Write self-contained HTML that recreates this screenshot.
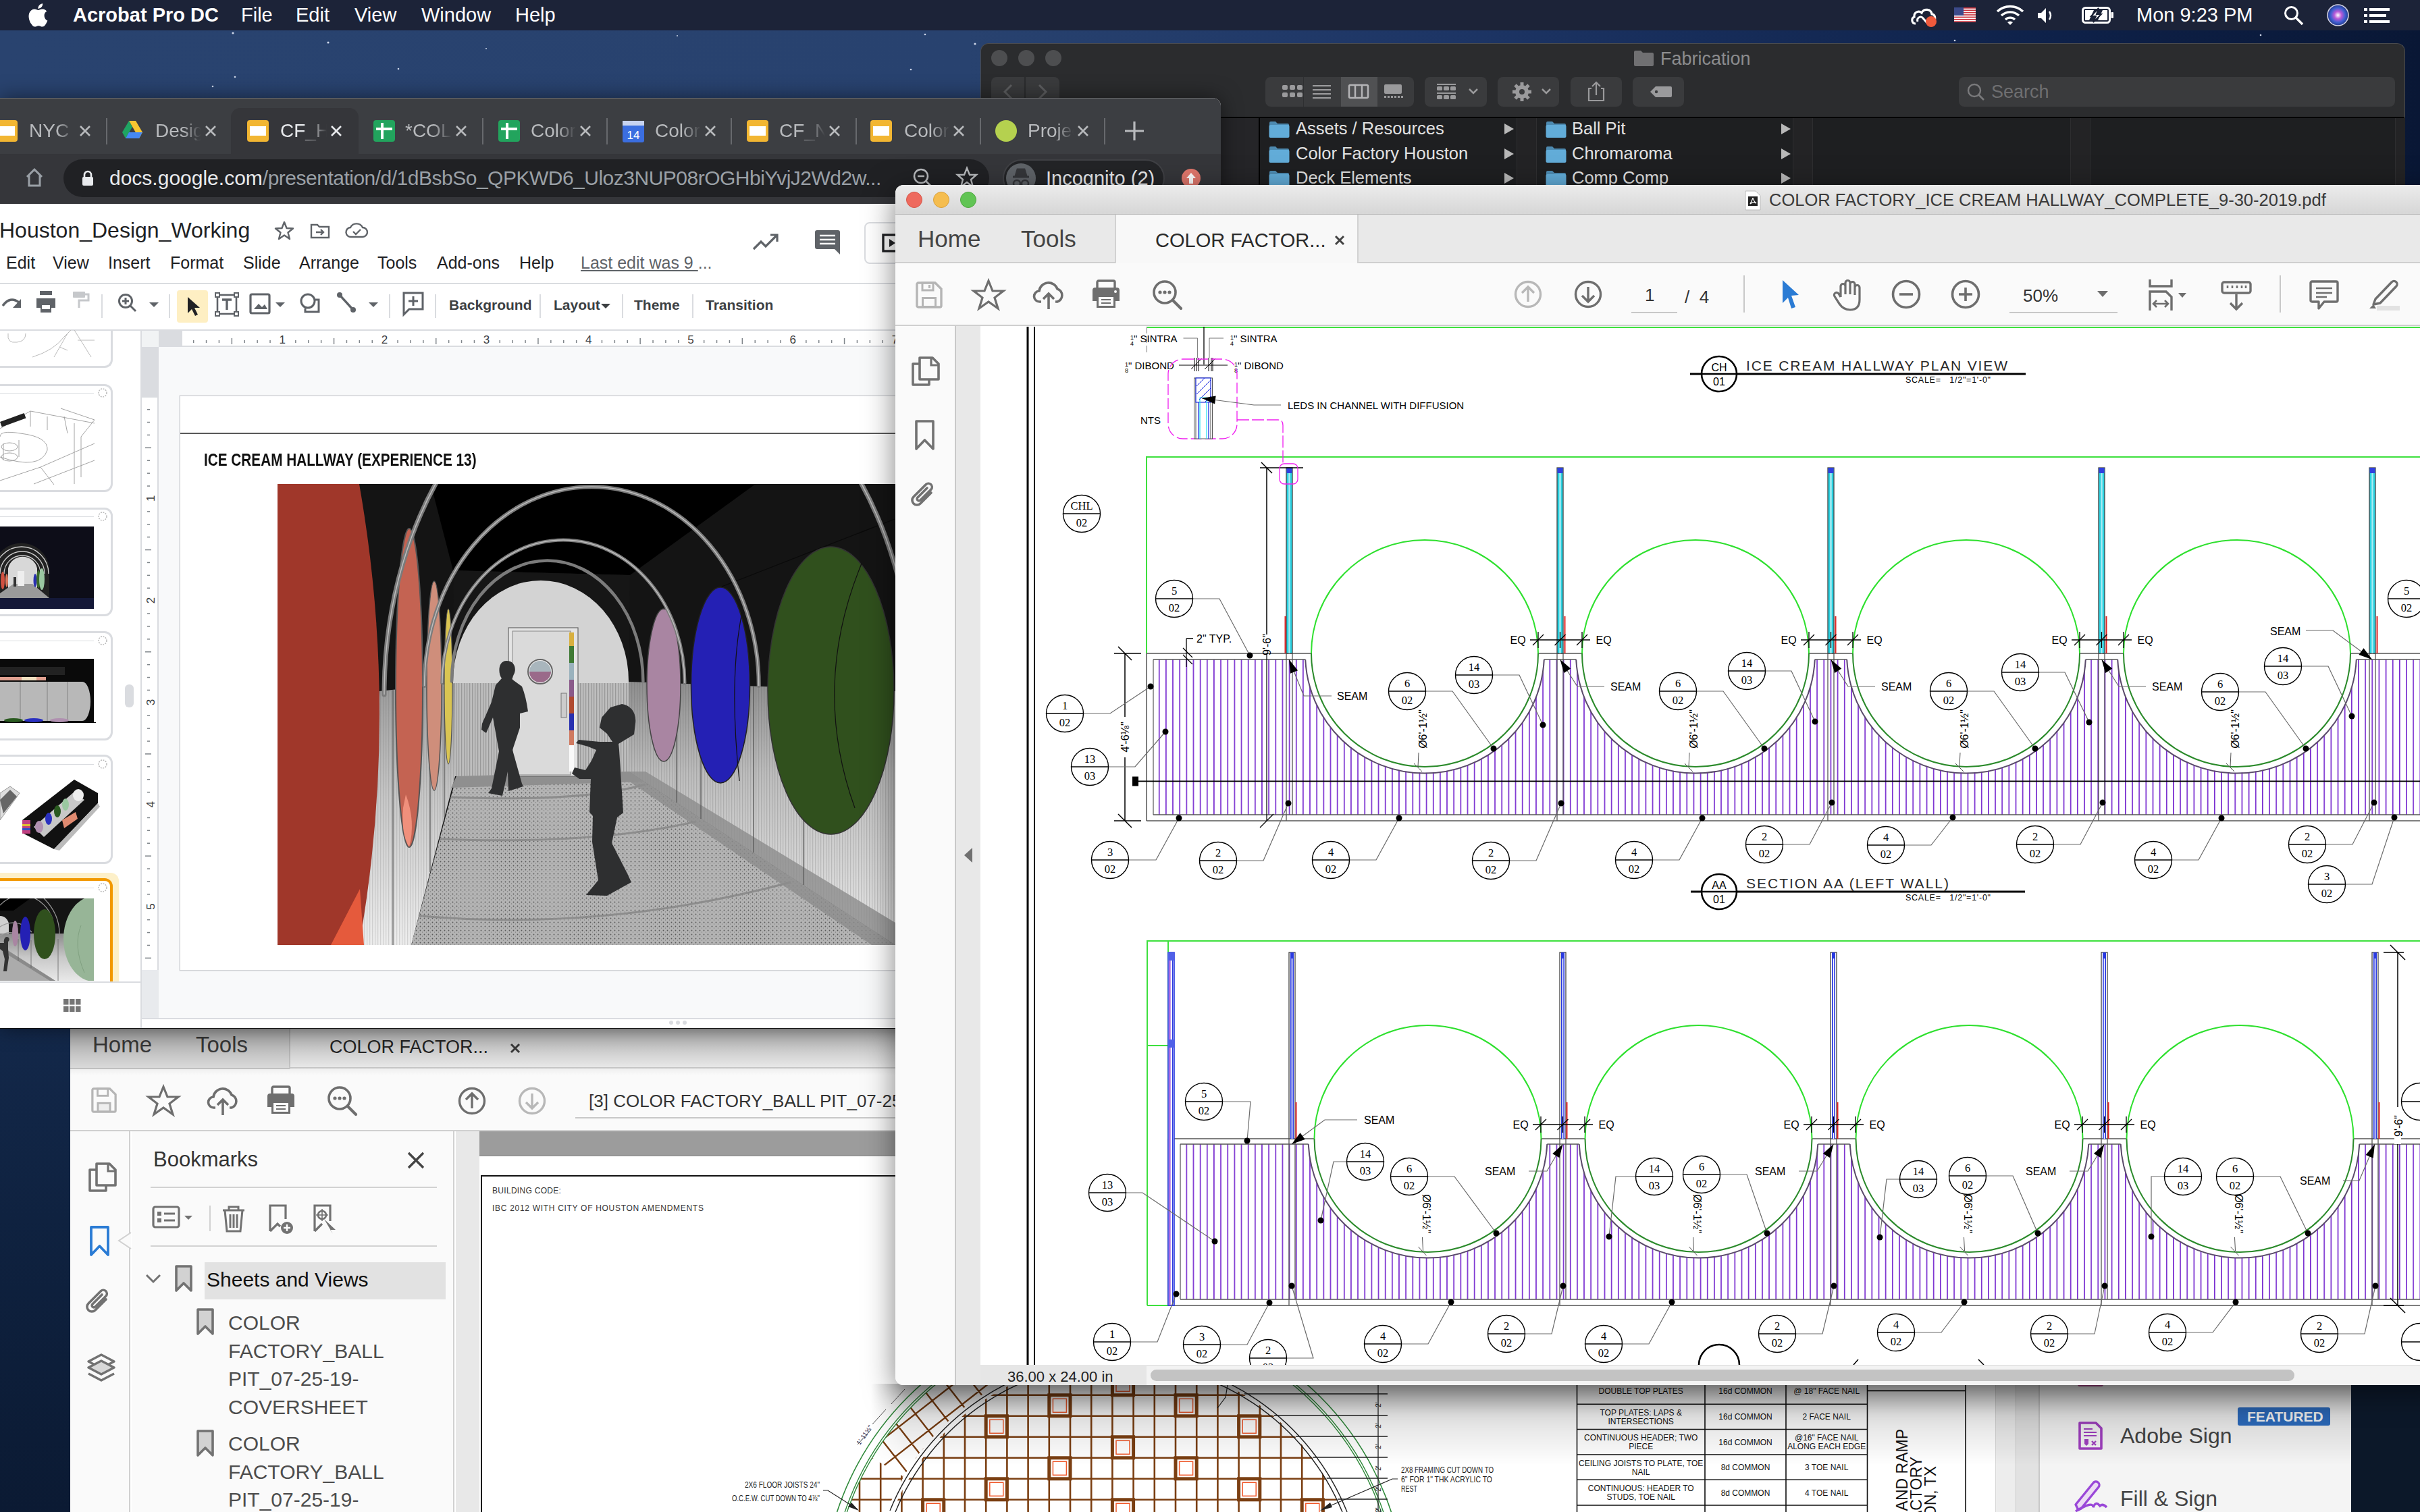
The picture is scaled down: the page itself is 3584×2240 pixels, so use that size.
<!DOCTYPE html>
<html><head><meta charset="utf-8">
<style>
*{box-sizing:border-box;margin:0;padding:0}
html,body{width:3584px;height:2240px;overflow:hidden}
body{position:relative;font-family:"Liberation Sans",sans-serif;background:#0e1a33}
.a{position:absolute}
.t{position:absolute;white-space:nowrap;line-height:1}
svg{position:absolute;overflow:visible}
</style></head><body>
<!-- desktop -->
<div class="a" style="left:0;top:0;width:3584px;height:2240px;background:linear-gradient(90deg,#29436f 0%,#28426f 40%,#1d3565 60%,#0e2149 85%,#091735 100%)"></div>
<svg class="a" style="left:0;top:0" width="3584" height="300">
<g fill="#cfd8ea">
<circle cx="345" cy="49" r="1.6"/><circle cx="486" cy="63" r="1.6"/><circle cx="315" cy="128" r="1.3"/><circle cx="590" cy="102" r="1.3"/><circle cx="348" cy="114" r="1.3"/><circle cx="1370" cy="51" r="1.3"/><circle cx="1444" cy="65" r="1.6"/><circle cx="1349" cy="103" r="1.3"/><circle cx="2895" cy="60" r="1.3"/><circle cx="3348" cy="52" r="1.3"/><circle cx="1003" cy="53" r="1"/><circle cx="720" cy="72" r="1"/>
</g></svg>
<!-- menu bar -->
<div class="a" style="left:0;top:0;width:3584px;height:45px;background:#1c2338"></div>
<svg style="left:41px;top:4px" width="30" height="36" viewBox="0 0 30 36"><path fill="#fff" d="M24.6 19.1c0-4.2 3.4-6.2 3.6-6.3-2-2.9-5-3.3-6.1-3.3-2.6-.3-5.1 1.5-6.4 1.5-1.3 0-3.4-1.5-5.6-1.5C7.2 9.6 4.5 11.3 3 13.9c-3 5.3-.8 13.1 2.2 17.4 1.4 2.1 3.1 4.4 5.4 4.3 2.2-.1 3-1.4 5.6-1.4s3.3 1.4 5.6 1.4c2.3 0 3.8-2.1 5.2-4.2 1.6-2.4 2.3-4.7 2.4-4.8-.1 0-4.7-1.8-4.8-7.5zM20.4 6.6C21.6 5.2 22.4 3.2 22.2 1.2c-1.7.1-3.8 1.1-5 2.5-1.1 1.3-2.1 3.3-1.8 5.2 1.9.1 3.8-1 5-2.3z"/></svg>
<div class="t" style="left:108px;top:8px;font-size:29px;font-weight:bold;color:#fff">Acrobat Pro DC</div>
<div class="t" style="left:357px;top:8px;font-size:29px;color:#fff">File</div>
<div class="t" style="left:438px;top:8px;font-size:29px;color:#fff">Edit</div>
<div class="t" style="left:525px;top:8px;font-size:29px;color:#fff">View</div>
<div class="t" style="left:624px;top:8px;font-size:29px;color:#fff">Window</div>
<div class="t" style="left:763px;top:8px;font-size:29px;color:#fff">Help</div>
<div class="t" style="left:3164px;top:8px;font-size:29px;color:#fff">Mon 9:23 PM</div>
<svg style="left:2829px;top:8px" width="42" height="32" viewBox="0 0 42 32">
<path d="M8 27 C2 27 1 19 6 17 C5 10 13 7 17 11 C20 4 31 5 32 13 C37 13 38 20 35 23" fill="none" stroke="#fff" stroke-width="3.2"/>
<path d="M11 24 C9 18 16 15 19 19 L25 26" fill="none" stroke="#fff" stroke-width="3"/>
<circle cx="31" cy="24" r="8" fill="#f05a3c"/></svg>
<svg style="left:2894px;top:11px" width="32" height="22" viewBox="0 0 32 22">
<rect width="32" height="22" fill="#fff"/>
<g fill="#c8323c"><rect y="0" width="32" height="1.7"/><rect y="3.4" width="32" height="1.7"/><rect y="6.8" width="32" height="1.7"/><rect y="10.2" width="32" height="1.7"/><rect y="13.6" width="32" height="1.7"/><rect y="17" width="32" height="1.7"/><rect y="20.3" width="32" height="1.7"/></g>
<rect width="14" height="12" fill="#3c4a8a"/></svg>
<svg style="left:2956px;top:7px" width="42" height="30" viewBox="0 0 42 30">
<path d="M2 10 A28 28 0 0 1 40 10" fill="none" stroke="#fff" stroke-width="3.4"/>
<path d="M8 16 A19 19 0 0 1 34 16" fill="none" stroke="#fff" stroke-width="3.4"/>
<path d="M14 22 A10 10 0 0 1 28 22" fill="none" stroke="#fff" stroke-width="3.4"/>
<path d="M17 26 L21 30 L25 26 A6 6 0 0 0 17 26Z" fill="#fff"/></svg>
<svg style="left:3018px;top:11px" width="26" height="24" viewBox="0 0 26 24">
<path d="M0 8 H5 L12 1 V23 L5 16 H0Z" fill="#fff"/><path d="M17 6 Q21 12 17 18" fill="none" stroke="#fff" stroke-width="2.4"/></svg>
<svg style="left:3083px;top:10px" width="48" height="25" viewBox="0 0 48 25">
<rect x="1.5" y="1.5" width="40" height="22" rx="4" fill="none" stroke="#fff" stroke-width="3"/>
<rect x="43.5" y="8" width="3.5" height="9" rx="1" fill="#fff"/>
<path d="M5 5 H18 L11 20 H5Z M38 5 H31 L24 20 H38Z" fill="#fff"/>
<path d="M25 2 L14 14 H21 L17 23 L29 11 H22Z" fill="#fff" stroke="#1a2034" stroke-width="2"/></svg>
<svg style="left:3382px;top:8px" width="30" height="30" viewBox="0 0 30 30">
<circle cx="11.5" cy="11.5" r="9" fill="none" stroke="#fff" stroke-width="3"/><path d="M18 18 L28 28" stroke="#fff" stroke-width="3.4"/></svg>
<svg style="left:3446px;top:6px" width="33" height="33" viewBox="0 0 33 33">
<defs><radialGradient id="siri" cx="50%" cy="50%" r="50%"><stop offset="0" stop-color="#fff"/><stop offset="0.35" stop-color="#b95ad8"/><stop offset="0.7" stop-color="#3d5fd0"/><stop offset="1" stop-color="#273a8a"/></radialGradient></defs>
<circle cx="16.5" cy="16.5" r="15.5" fill="url(#siri)" stroke="#d8d8e8" stroke-width="1.5"/></svg>
<svg style="left:3501px;top:11px" width="38" height="24" viewBox="0 0 38 24">
<g fill="#fff"><rect x="0" y="1" width="5" height="4"/><rect x="8" y="1" width="30" height="4"/><rect x="0" y="10" width="5" height="4"/><rect x="8" y="10" width="25" height="4"/><rect x="0" y="19" width="5" height="4"/><rect x="8" y="19" width="30" height="4"/></g></svg>
<!-- finder -->
<div class="a" style="left:1452px;top:64px;width:2110px;height:230px;background:#2b2c2e;border-radius:12px 12px 0 0;border:1px solid #4a4b4d;border-bottom:none"></div>
<div class="a" style="left:1453px;top:173px;width:2108px;height:2px;background:#050505"></div>
<div class="a" style="left:1453px;top:175px;width:2108px;height:110px;background:#1e1f21"></div>
<div class="a" style="left:1453px;top:175px;width:412px;height:110px;background:#252528"></div>
<div class="a" style="left:1864px;top:175px;width:2px;height:110px;background:#000"></div>
<div class="a" style="left:2246px;top:175px;width:30px;height:110px;background:#232325;border-left:1px solid #2e2e30;border-right:1px solid #2e2e30"></div>
<div class="a" style="left:2655px;top:175px;width:30px;height:110px;background:#232325;border-left:1px solid #2e2e30;border-right:1px solid #2e2e30"></div>
<div class="a" style="left:3066px;top:175px;width:30px;height:110px;background:#232325;border-left:1px solid #2e2e30;border-right:1px solid #2e2e30"></div>
<div class="a" style="left:3547px;top:175px;width:15px;height:110px;background:#232325;border-left:1px solid #2e2e30"></div>
<div class="a" style="left:1468px;top:74px;width:24px;height:24px;border-radius:50%;background:#4d4e50"></div>
<div class="a" style="left:1508px;top:74px;width:24px;height:24px;border-radius:50%;background:#4d4e50"></div>
<div class="a" style="left:1548px;top:74px;width:24px;height:24px;border-radius:50%;background:#4d4e50"></div>
<!-- toolbar buttons -->
<div class="a" style="left:1468px;top:114px;width:49px;height:44px;background:#3a3b3d;border-radius:8px 0 0 8px"></div>
<div class="a" style="left:1519px;top:114px;width:50px;height:44px;background:#3a3b3d;border-radius:0 8px 8px 0"></div>
<svg style="left:1468px;top:114px" width="101" height="44"><path d="M30 12 L20 22 L30 32" fill="none" stroke="#5d5e60" stroke-width="3"/><path d="M71 12 L81 22 L71 32" fill="none" stroke="#5d5e60" stroke-width="3"/></svg>
<div class="a" style="left:1874px;top:114px;width:220px;height:44px;background:#3a3b3d;border-radius:8px"></div>
<div class="a" style="left:1986px;top:114px;width:54px;height:44px;background:#505153"></div>
<div class="a" style="left:1930px;top:114px;width:1px;height:44px;background:#2e2f31"></div>
<div class="a" style="left:2094px;top:114px;width:0;height:0"></div>
<svg style="left:1874px;top:114px" width="220" height="44">
<g fill="#9a9a9c"><rect x="25" y="12" width="8" height="7" rx="2"/><rect x="36" y="12" width="8" height="7" rx="2"/><rect x="47" y="12" width="8" height="7" rx="2"/><rect x="25" y="23" width="8" height="7" rx="2"/><rect x="36" y="23" width="8" height="7" rx="2"/><rect x="47" y="23" width="8" height="7" rx="2"/>
<rect x="70" y="12" width="27" height="2.2"/><rect x="70" y="18" width="27" height="2.2"/><rect x="70" y="24" width="27" height="2.2"/><rect x="70" y="30" width="27" height="2.2"/>
<rect x="176" y="11" width="26" height="14" rx="2"/><rect x="176" y="28" width="3" height="3"/><rect x="181" y="28" width="3" height="3"/><rect x="186" y="28" width="3" height="3"/><rect x="191" y="28" width="3" height="3"/><rect x="196" y="28" width="3" height="3"/><rect x="201" y="28" width="3" height="3"/></g>
<rect x="124" y="12" width="28" height="19" rx="2" fill="none" stroke="#b4b4b6" stroke-width="2.5"/><path d="M133 12 V31 M143 12 V31" stroke="#b4b4b6" stroke-width="2.5"/></svg>
<div class="a" style="left:2110px;top:114px;width:92px;height:44px;background:#3a3b3d;border-radius:8px"></div>
<svg style="left:2110px;top:114px" width="92" height="44"><g fill="#9a9a9c"><rect x="18" y="10" width="28" height="2"/><rect x="18" y="14" width="8" height="6" rx="1.5"/><rect x="28" y="14" width="8" height="6" rx="1.5"/><rect x="38" y="14" width="8" height="6" rx="1.5"/><rect x="18" y="23" width="28" height="2"/><rect x="18" y="27" width="8" height="6" rx="1.5"/><rect x="28" y="27" width="8" height="6" rx="1.5"/><rect x="38" y="27" width="8" height="6" rx="1.5"/></g><path d="M66 18 L72 24 L78 18" fill="none" stroke="#9a9a9c" stroke-width="2.5"/></svg>
<div class="a" style="left:2218px;top:114px;width:91px;height:44px;background:#3a3b3d;border-radius:8px"></div>
<svg style="left:2218px;top:114px" width="91" height="44"><g transform="translate(36,22)"><circle r="10" fill="#9a9a9c"/><g stroke="#9a9a9c" stroke-width="5"><path d="M0 -14 V14 M-14 0 H14 M-10 -10 L10 10 M-10 10 L10 -10"/></g><circle r="4" fill="#3a3b3d"/></g><path d="M66 18 L72 24 L78 18" fill="none" stroke="#9a9a9c" stroke-width="2.5"/></svg>
<div class="a" style="left:2326px;top:114px;width:76px;height:44px;background:#3a3b3d;border-radius:8px"></div>
<svg style="left:2326px;top:114px" width="76" height="44"><path d="M31 17 H27 V35 H49 V17 H45 M38 27 V8 M32 14 L38 8 L44 14" fill="none" stroke="#9a9a9c" stroke-width="2.2"/></svg>
<div class="a" style="left:2418px;top:114px;width:76px;height:44px;background:#3a3b3d;border-radius:8px"></div>
<svg style="left:2418px;top:114px" width="76" height="44"><path d="M26 22 L34 14 H56 A2 2 0 0 1 58 16 V28 A2 2 0 0 1 56 30 H34Z" fill="#9a9a9c"/><circle cx="35" cy="22" r="2.2" fill="#3a3b3d"/></svg>
<div class="a" style="left:2901px;top:114px;width:646px;height:44px;background:#3a3b3d;border-radius:8px"></div>
<svg style="left:2912px;top:122px" width="30" height="30"><circle cx="12" cy="12" r="9" fill="none" stroke="#7a7a7c" stroke-width="2.4"/><path d="M18.5 18.5 L26 26" stroke="#7a7a7c" stroke-width="2.6"/></svg>
<div class="t" style="left:2949px;top:123px;font-size:27px;color:#6f6f71">Search</div>
<svg style="left:2419px;top:74px" width="31" height="25"><path d="M1 3 A2 2 0 0 1 3 1 H11 L14 4 H28 A2 2 0 0 1 30 6 V22 A2 2 0 0 1 28 24 H3 A2 2 0 0 1 1 22Z" fill="#707072"/></svg>
<div class="t" style="left:2459px;top:74px;font-size:27px;color:#8c8c8e">Fabrication</div>
<svg style="left:1879px;top:179px" width="31" height="26"><path d="M1 3 A2 2 0 0 1 3 1 H10 L13 4 H28 A2 2 0 0 1 30 6 V8 H1Z" fill="#4d8ab0"/><rect x="0.5" y="6" width="30" height="19" rx="2" fill="#62acd8"/></svg><div class="t" style="left:1919px;top:178px;font-size:25.5px;color:#e2e2e2">Assets / Resources</div><svg style="left:2227px;top:182px" width="16" height="18"><path d="M1 1 L15 9 L1 17Z" fill="#b8b8b8"/></svg><svg style="left:2289px;top:179px" width="31" height="26"><path d="M1 3 A2 2 0 0 1 3 1 H10 L13 4 H28 A2 2 0 0 1 30 6 V8 H1Z" fill="#4d8ab0"/><rect x="0.5" y="6" width="30" height="19" rx="2" fill="#62acd8"/></svg><div class="t" style="left:2328px;top:178px;font-size:25.5px;color:#e2e2e2">Ball Pit</div><svg style="left:2637px;top:182px" width="16" height="18"><path d="M1 1 L15 9 L1 17Z" fill="#b8b8b8"/></svg><svg style="left:1879px;top:216px" width="31" height="26"><path d="M1 3 A2 2 0 0 1 3 1 H10 L13 4 H28 A2 2 0 0 1 30 6 V8 H1Z" fill="#4d8ab0"/><rect x="0.5" y="6" width="30" height="19" rx="2" fill="#62acd8"/></svg><div class="t" style="left:1919px;top:215px;font-size:25.5px;color:#e2e2e2">Color Factory Houston</div><svg style="left:2227px;top:219px" width="16" height="18"><path d="M1 1 L15 9 L1 17Z" fill="#b8b8b8"/></svg><svg style="left:2289px;top:216px" width="31" height="26"><path d="M1 3 A2 2 0 0 1 3 1 H10 L13 4 H28 A2 2 0 0 1 30 6 V8 H1Z" fill="#4d8ab0"/><rect x="0.5" y="6" width="30" height="19" rx="2" fill="#62acd8"/></svg><div class="t" style="left:2328px;top:215px;font-size:25.5px;color:#e2e2e2">Chromaroma</div><svg style="left:2637px;top:219px" width="16" height="18"><path d="M1 1 L15 9 L1 17Z" fill="#b8b8b8"/></svg><svg style="left:1879px;top:252px" width="31" height="26"><path d="M1 3 A2 2 0 0 1 3 1 H10 L13 4 H28 A2 2 0 0 1 30 6 V8 H1Z" fill="#4d8ab0"/><rect x="0.5" y="6" width="30" height="19" rx="2" fill="#62acd8"/></svg><div class="t" style="left:1919px;top:251px;font-size:25.5px;color:#e2e2e2">Deck Elements</div><svg style="left:2227px;top:255px" width="16" height="18"><path d="M1 1 L15 9 L1 17Z" fill="#b8b8b8"/></svg><svg style="left:2289px;top:252px" width="31" height="26"><path d="M1 3 A2 2 0 0 1 3 1 H10 L13 4 H28 A2 2 0 0 1 30 6 V8 H1Z" fill="#4d8ab0"/><rect x="0.5" y="6" width="30" height="19" rx="2" fill="#62acd8"/></svg><div class="t" style="left:2328px;top:251px;font-size:25.5px;color:#e2e2e2">Comp Comp</div><svg style="left:2637px;top:255px" width="16" height="18"><path d="M1 1 L15 9 L1 17Z" fill="#b8b8b8"/></svg>
<!-- background acrobat window (bottom) -->
<div class="a" style="left:0;top:1515px;width:104px;height:725px;background:linear-gradient(180deg,#13284a,#0f2240 40%,#0b1a33)"></div>
<div class="a" style="left:3482px;top:2040px;width:102px;height:200px;background:#0c1829"></div>
<div class="a" style="left:104px;top:1515px;width:3378px;height:740px;background:#fff;overflow:hidden">
<div class="a" style="left:0;top:0;width:3378px;height:68px;background:#f4f4f4;border-bottom:2px solid #cfcfcf"></div>
<div class="a" style="left:0;top:0;width:326px;height:69px;background:#e4e4e4;border-right:2px solid #cfcfcf;border-bottom:2px solid #c8c8c8"></div>
<div class="a" style="left:0;top:69px;width:3378px;height:92px;background:#fafafa;border-bottom:2px solid #d0d0d0"></div>
<div class="a" style="left:0;top:161px;width:89px;height:600px;background:#fafafa;border-right:2px solid #d0d0d0"></div>
<div class="a" style="left:91px;top:161px;width:478px;height:600px;background:#fafafa;border-right:2px solid #d0d0d0"></div>
<div class="a" style="left:571px;top:161px;width:35px;height:600px;background:#e8e8e8"></div>
<div class="a" style="left:606px;top:161px;width:2300px;height:37px;background:#9c9c9c;border-bottom:1px solid #888"></div>
<div class="a" style="left:608px;top:226px;width:2300px;height:600px;border-left:2px solid #111;border-top:2px solid #111"></div>
<div class="a" style="left:2851px;top:161px;width:30px;height:600px;background:#ededed;border-left:1px solid #d8d8d8"></div>
<div class="a" style="left:2881px;top:161px;width:36px;height:600px;background:#e2e2e2;border-left:1px solid #c8c8c8;border-right:2px solid #c8c8c8"></div>
<div class="a" style="left:2917px;top:161px;width:461px;height:600px;background:#f4f4f4"></div>
</div>
<div class="t" style="left:137px;top:1531px;font-size:33px;color:#444">Home</div>
<div class="t" style="left:290px;top:1531px;font-size:33px;color:#444">Tools</div>
<div class="t" style="left:488px;top:1538px;font-size:27px;color:#2b2b2b">COLOR FACTOR...</div>
<svg style="left:755px;top:1545px" width="16" height="16"><path d="M2 2 L14 14 M14 2 L2 14" stroke="#444" stroke-width="3"/></svg>
<svg style="left:134px;top:1610px" width="40" height="40" viewBox="0 0 42 42"><path d="M3 5 A2 2 0 0 1 5 3 H30 L39 12 V37 A2 2 0 0 1 37 39 H5 A2 2 0 0 1 3 37Z" fill="none" stroke="#b5b5b5" stroke-width="3.4"/><rect x="11" y="3" width="16" height="11" fill="none" stroke="#b5b5b5" stroke-width="3"/><rect x="10" y="24" width="22" height="15" fill="#b5b5b5"/><rect x="13" y="27" width="16" height="10" fill="#eee"/></svg>
<svg style="left:218px;top:1607px" width="48" height="46" viewBox="0 0 48 46"><path d="M24 3 L30 18 L46 18 L33 28 L38 44 L24 34 L10 44 L15 28 L2 18 L18 18Z" fill="none" stroke="#6e6e6e" stroke-width="3.2"/></svg>
<svg style="left:307px;top:1609px" width="46" height="44" viewBox="0 0 46 44"><path d="M12 32 H10 A8 8 0 0 1 9 16 A14 14 0 0 1 36 13 A10 10 0 0 1 36 32 H33" fill="none" stroke="#6e6e6e" stroke-width="3.6"/><path d="M23 43 V20 M15 28 L23 20 L31 28" fill="none" stroke="#6e6e6e" stroke-width="3.6"/></svg>
<svg style="left:394px;top:1608px" width="44" height="44" viewBox="0 0 44 44"><rect x="9" y="2" width="26" height="12" rx="2" fill="none" stroke="#6e6e6e" stroke-width="3.4"/><path d="M2 16 A4 4 0 0 1 6 12 H38 A4 4 0 0 1 42 16 V32 H36 V42 H8 V32 H2Z" fill="#6e6e6e"/><rect x="11" y="26" width="22" height="13" fill="#fafafa"/><path d="M15 30 H29 M15 35 H29" stroke="#6e6e6e" stroke-width="2.2"/></svg>
<svg style="left:484px;top:1608px" width="46" height="46" viewBox="0 0 46 46"><circle cx="19" cy="19" r="16" fill="none" stroke="#6e6e6e" stroke-width="3.6"/><path d="M31 31 L43 43" stroke="#6e6e6e" stroke-width="4.2" stroke-linecap="round"/><circle cx="12" cy="19" r="2.6" fill="#6e6e6e"/><circle cx="19" cy="19" r="2.6" fill="#6e6e6e"/><circle cx="26" cy="19" r="2.6" fill="#6e6e6e"/></svg>
<svg style="left:678px;top:1610px" width="42" height="42"><circle cx="21" cy="21" r="18.5" fill="none" stroke="#6e6e6e" stroke-width="3.4"/><path d="M21 32 V11 M12 19 L21 10 L30 19" fill="none" stroke="#6e6e6e" stroke-width="3.4"/></svg>
<svg style="left:767px;top:1610px" width="42" height="42"><circle cx="21" cy="21" r="18.5" fill="none" stroke="#b8b8b8" stroke-width="3.4"/><path d="M21 10 V31 M12 23 L21 32 L30 23" fill="none" stroke="#b8b8b8" stroke-width="3.4"/></svg>
<div class="t" style="left:872px;top:1618px;font-size:26px;color:#333">[3] COLOR FACTORY_BALL PIT_07-25-19</div>
<div class="a" style="left:852px;top:1655px;width:480px;height:2px;background:#c8c8c8"></div>
<svg style="left:131px;top:1722px" width="44" height="46" viewBox="0 0 44 46"><path d="M12 11 H2 V42 H26 V35" fill="none" stroke="#727272" stroke-width="3.6" stroke-linejoin="round"/><path d="M12 2 H31 L40 11 V34 H12Z" fill="#fafafa" stroke="#727272" stroke-width="3.6" stroke-linejoin="round"/><path d="M29 2 V13 H40" fill="none" stroke="#727272" stroke-width="3.2"/></svg>
<svg style="left:133px;top:1816px" width="30" height="46"><path d="M2 2 H27 V43 L14.5 30 L2 43Z" fill="none" stroke="#2a7bd4" stroke-width="3.8" stroke-linejoin="round"/></svg>
<svg style="left:176px;top:1826px" width="18" height="24"><path d="M18 0 L0 12 L18 24" fill="#fafafa" stroke="#d0d0d0" stroke-width="2"/></svg>
<svg style="left:127px;top:1907px" width="42" height="44" viewBox="0 0 42 44"><path d="M30 18 L14 34 A7 7 0 0 1 4 24 L22 6 A5 5 0 0 1 30 13 L14 29 A2.5 2.5 0 0 1 10 25 L24 11" fill="none" stroke="#727272" stroke-width="3.6" stroke-linecap="round"/></svg>
<svg style="left:128px;top:2004px" width="44" height="46" viewBox="0 0 44 46"><g fill="none" stroke="#727272" stroke-width="3.4" stroke-linejoin="round"><path d="M22 3 L41 13 L22 23 L3 13Z"/><path d="M3 22 L22 32 L41 22 L22 12Z" fill="#d8d8d8"/><path d="M3 31 L22 41 L41 31"/></g></svg>
<div class="t" style="left:227px;top:1702px;font-size:31px;color:#333">Bookmarks</div>
<svg style="left:602px;top:1705px" width="28" height="28"><path d="M3 3 L25 25 M25 3 L3 25" stroke="#444" stroke-width="3.4"/></svg>
<div class="a" style="left:223px;top:1758px;width:424px;height:2px;background:#d2d2d2"></div>
<svg style="left:225px;top:1784px" width="300" height="44" viewBox="0 0 300 44">
<rect x="2" y="4" width="38" height="30" rx="3" fill="none" stroke="#727272" stroke-width="3.2"/><rect x="8" y="11" width="6" height="6" fill="#727272"/><rect x="8" y="21" width="6" height="6" fill="#727272"/><path d="M18 14 H34 M18 24 H34" stroke="#727272" stroke-width="3"/>
<path d="M48 17 H60 L54 23Z" fill="#727272"/>
<rect x="85" y="2" width="2" height="38" fill="#d2d2d2"/>
<path d="M105 9 H137 M114 9 V4 H128 V9 M108 9 L111 40 H131 L134 9 M116 15 V35 M121 15 V35 M126 15 V35" fill="none" stroke="#727272" stroke-width="3"/>
<path d="M175 40 V2 H198 V22" fill="none" stroke="#727272" stroke-width="3.2"/><path d="M175 40 L186 29 L190 33" fill="none" stroke="#727272" stroke-width="3.2"/><circle cx="200" cy="35" r="9" fill="#727272"/><path d="M200 30 V40 M195 35 H205" stroke="#fff" stroke-width="2.4"/>
<path d="M241 40 V2 H264 V25 M241 40 L252 29" fill="none" stroke="#727272" stroke-width="3.2"/><circle cx="252" cy="16" r="6" fill="none" stroke="#727272" stroke-width="2.6"/><path d="M252 7 V25 M243 16 H261" stroke="#727272" stroke-width="1.6"/><path d="M255 22 L272 38 L264 38 L268 44" fill="#727272"/>
</svg>
<div class="a" style="left:223px;top:1845px;width:424px;height:2px;background:#d2d2d2"></div>
<svg style="left:215px;top:1886px" width="24" height="16"><path d="M2 3 L12 13 L22 3" fill="none" stroke="#727272" stroke-width="3"/></svg>
<svg style="left:259px;top:1874px" width="26" height="40"><path d="M2 2 H24 V38 L13 27 L2 38Z" fill="#d2d2d2" stroke="#727272" stroke-width="3.6" stroke-linejoin="round"/></svg>
<div class="a" style="left:303px;top:1870px;width:357px;height:55px;background:#e2e2e2"></div>
<div class="t" style="left:306px;top:1881px;font-size:30px;color:#111">Sheets and Views</div>
<svg style="left:291px;top:1938px" width="26" height="40"><path d="M2 2 H24 V38 L13 27 L2 38Z" fill="#d2d2d2" stroke="#727272" stroke-width="3.6" stroke-linejoin="round"/></svg>
<div class="t" style="left:338px;top:1939px;font-size:30px;color:#4d4d4d;line-height:41.5px;white-space:pre">COLOR
FACTORY_BALL
PIT_07-25-19-
COVERSHEET</div>
<svg style="left:291px;top:2118px" width="26" height="40"><path d="M2 2 H24 V38 L13 27 L2 38Z" fill="#d2d2d2" stroke="#727272" stroke-width="3.6" stroke-linejoin="round"/></svg>
<div class="t" style="left:338px;top:2118px;font-size:30px;color:#4d4d4d;line-height:41.5px;white-space:pre">COLOR
FACTORY_BALL
PIT_07-25-19-</div>
<div class="t" style="left:729px;top:1758px;font-size:12px;color:#333;letter-spacing:0.3px">BUILDING CODE:</div>
<div class="t" style="left:729px;top:1784px;font-size:12px;color:#333;letter-spacing:0.7px">IBC 2012 WITH CITY OF HOUSTON AMENDMENTS</div>
<svg style="left:0;top:0" width="3584" height="2240" viewBox="0 0 3584 2240">
<defs><clipPath id="bgpg"><rect x="713" y="1742" width="2242" height="498"/></clipPath>
<clipPath id="gridc"><circle cx="1650" cy="2375" r="364"/><path d="M1650 1957 A418 418 0 0 0 1650 2793Z"/></clipPath>
<clipPath id="ringc"><path d="M1290.8 2159.2 A419 419 0 0 1 1613.5 1957.6 L1618.3 2012.4 A364 364 0 0 0 1338.0 2187.5Z"/></clipPath>
</defs>
<g clip-path="url(#bgpg)" fill="none" font-family="Liberation Sans">
<g clip-path="url(#gridc)"><path d="M1179.4 1900 V2260 M1210.6 1900 V2260 M1241.8 1900 V2260 M1273.0 1900 V2260 M1304.2 1900 V2260 M1335.4 1900 V2260 M1366.6 1900 V2260 M1397.8 1900 V2260 M1429.0 1900 V2260 M1460.2 1900 V2260 M1491.4 1900 V2260 M1522.6 1900 V2260 M1553.8 1900 V2260 M1585.0 1900 V2260 M1616.2 1900 V2260 M1647.4 1900 V2260 M1678.6 1900 V2260 M1709.8 1900 V2260 M1741.0 1900 V2260 M1772.2 1900 V2260 M1803.4 1900 V2260 M1834.6 1900 V2260 M1865.8 1900 V2260 M1897.0 1900 V2260 M1928.2 1900 V2260 M1959.4 1900 V2260 M1990.6 1900 V2260 M2021.8 1900 V2260 M2053.0 1900 V2260 M2084.2 1900 V2260 M2115.4 1900 V2260 M2146.6 1900 V2260 M2177.8 1900 V2260 M1100 2252.8 H2200 M1100 2221.8 H2200 M1100 2190.8 H2200 M1100 2159.8 H2200 M1100 2128.8 H2200 M1100 2097.8 H2200 M1100 2066.8 H2200 M1100 2035.8 H2200 M1100 2004.8 H2200 M1100 1973.8 H2200 M1100 1942.8 H2200 M1100 1911.8 H2200 M1100 1880.8 H2200" stroke="#7b3f12" stroke-width="2.6"/>
<path d="M1290.8 2159.2 A419 419 0 0 1 1613.5 1957.6 L1618.3 2012.4 A364 364 0 0 0 1338.0 2187.5Z" fill="#fff"/>
<g clip-path="url(#ringc)"><g transform="translate(1400,2100) rotate(-38)"><path d="M-400 -630.0 H400 M-630.0 -400 V400 M-400 -598.5 H400 M-598.5 -400 V400 M-400 -567.0 H400 M-567.0 -400 V400 M-400 -535.5 H400 M-535.5 -400 V400 M-400 -504.0 H400 M-504.0 -400 V400 M-400 -472.5 H400 M-472.5 -400 V400 M-400 -441.0 H400 M-441.0 -400 V400 M-400 -409.5 H400 M-409.5 -400 V400 M-400 -378.0 H400 M-378.0 -400 V400 M-400 -346.5 H400 M-346.5 -400 V400 M-400 -315.0 H400 M-315.0 -400 V400 M-400 -283.5 H400 M-283.5 -400 V400 M-400 -252.0 H400 M-252.0 -400 V400 M-400 -220.5 H400 M-220.5 -400 V400 M-400 -189.0 H400 M-189.0 -400 V400 M-400 -157.5 H400 M-157.5 -400 V400 M-400 -126.0 H400 M-126.0 -400 V400 M-400 -94.5 H400 M-94.5 -400 V400 M-400 -63.0 H400 M-63.0 -400 V400 M-400 -31.5 H400 M-31.5 -400 V400 M-400 0.0 H400 M0.0 -400 V400 M-400 31.5 H400 M31.5 -400 V400 M-400 63.0 H400 M63.0 -400 V400 M-400 94.5 H400 M94.5 -400 V400 M-400 126.0 H400 M126.0 -400 V400 M-400 157.5 H400 M157.5 -400 V400 M-400 189.0 H400 M189.0 -400 V400 M-400 220.5 H400 M220.5 -400 V400 M-400 252.0 H400 M252.0 -400 V400 M-400 283.5 H400 M283.5 -400 V400 M-400 315.0 H400 M315.0 -400 V400 M-400 346.5 H400 M346.5 -400 V400 M-400 378.0 H400 M378.0 -400 V400 M-400 409.5 H400 M409.5 -400 V400 M-400 441.0 H400 M441.0 -400 V400 M-400 472.5 H400 M472.5 -400 V400 M-400 504.0 H400 M504.0 -400 V400 M-400 535.5 H400 M535.5 -400 V400 M-400 567.0 H400 M567.0 -400 V400 M-400 598.5 H400 M598.5 -400 V400" stroke="#7b3f12" stroke-width="2.4"/><rect x="-47" y="31.5" width="31.5" height="31.5" fill="none" stroke="#7b3f12" stroke-width="4.5"/><rect x="-41" y="37.5" width="19.5" height="19.5" stroke="#f26a3a" stroke-width="1.3"/><rect x="47" y="-63" width="31.5" height="31.5" fill="none" stroke="#7b3f12" stroke-width="4.5"/><rect x="53" y="-57" width="19.5" height="19.5" stroke="#f26a3a" stroke-width="1.3"/></g></g>
<path d="M1200 2168 L1300 2172 L1540 1990" stroke="none"/>
</g>
<g clip-path="url(#gridc)"><rect x="1553.8" y="2066.8" width="31.2" height="31" stroke="#7b3f12" stroke-width="5"/><rect x="1559.4" y="2072.3" width="20" height="20" stroke="#f0582a" stroke-width="1.5"/><rect x="1741.0" y="2066.8" width="31.2" height="31" stroke="#7b3f12" stroke-width="5"/><rect x="1746.6" y="2072.3" width="20" height="20" stroke="#f0582a" stroke-width="1.5"/><rect x="1460.2" y="2097.8" width="31.2" height="31" stroke="#7b3f12" stroke-width="5"/><rect x="1465.8" y="2103.3" width="20" height="20" stroke="#f0582a" stroke-width="1.5"/><rect x="1834.6" y="2097.8" width="31.2" height="31" stroke="#7b3f12" stroke-width="5"/><rect x="1840.2" y="2103.3" width="20" height="20" stroke="#f0582a" stroke-width="1.5"/><rect x="1647.4" y="2128.8" width="31.2" height="31" stroke="#7b3f12" stroke-width="5"/><rect x="1653.0" y="2134.3" width="20" height="20" stroke="#f0582a" stroke-width="1.5"/><rect x="1553.8" y="2159.8" width="31.2" height="31" stroke="#7b3f12" stroke-width="5"/><rect x="1559.4" y="2165.3" width="20" height="20" stroke="#f0582a" stroke-width="1.5"/><rect x="1741.0" y="2159.8" width="31.2" height="31" stroke="#7b3f12" stroke-width="5"/><rect x="1746.6" y="2165.3" width="20" height="20" stroke="#f0582a" stroke-width="1.5"/><rect x="1460.2" y="2190.8" width="31.2" height="31" stroke="#7b3f12" stroke-width="5"/><rect x="1465.8" y="2196.3" width="20" height="20" stroke="#f0582a" stroke-width="1.5"/><rect x="1834.6" y="2190.8" width="31.2" height="31" stroke="#7b3f12" stroke-width="5"/><rect x="1840.2" y="2196.3" width="20" height="20" stroke="#f0582a" stroke-width="1.5"/><rect x="1366.6" y="2221.8" width="31.2" height="31" stroke="#7b3f12" stroke-width="5"/><rect x="1372.2" y="2227.3" width="20" height="20" stroke="#f0582a" stroke-width="1.5"/><rect x="1647.4" y="2221.8" width="31.2" height="31" stroke="#7b3f12" stroke-width="5"/><rect x="1653.0" y="2227.3" width="20" height="20" stroke="#f0582a" stroke-width="1.5"/><rect x="1928.2" y="2221.8" width="31.2" height="31" stroke="#7b3f12" stroke-width="5"/><rect x="1933.8" y="2227.3" width="20" height="20" stroke="#f0582a" stroke-width="1.5"/><rect x="1647.4" y="2035.8" width="31.2" height="31" stroke="#7b3f12" stroke-width="5"/><rect x="1653.0" y="2041.3" width="20" height="20" stroke="#f0582a" stroke-width="1.5"/><rect x="1834.6" y="2004.8" width="31.2" height="31" stroke="#7b3f12" stroke-width="5"/><rect x="1840.2" y="2010.3" width="20" height="20" stroke="#f0582a" stroke-width="1.5"/></g>
<circle cx="1650" cy="2375" r="432" stroke="#2f8a3a" stroke-width="1.6"/>
<circle cx="1650" cy="2375" r="421" stroke="#2f8a3a" stroke-width="1.4"/><circle cx="1650" cy="2375" r="418" stroke="#2f8a3a" stroke-width="1.4"/>
<path d="M1318 2238 A365 365 0 0 1 1995 2240" stroke="#fff" stroke-width="8"/>
<path d="M1318 2238 A365 365 0 0 1 1995 2240" stroke="#222" stroke-width="1.4"/><path d="M1326 2240 A358 358 0 0 1 1988 2240" stroke="#222" stroke-width="1.4"/>
<path d="M1842.7 2065 H2055 M2041 2056 V2074 M1886.5 2097 H2055 M2041 2088 V2106 M1918.7 2128 H2055 M2041 2119 V2137 M1944.2 2159 H2055 M2041 2150 V2168 M1964.6 2190 H2055 M2041 2181 V2199 M1980.9 2221 H2055 M2041 2212 V2230 M2041 2040 V2240" stroke="#222" stroke-width="1.3"/>
<text transform="translate(2045,2081) rotate(-90)" font-size="10" text-anchor="middle" fill="#222">2'</text>
<text transform="translate(2045,2112) rotate(-90)" font-size="10" text-anchor="middle" fill="#222">2'</text>
<text transform="translate(2045,2143) rotate(-90)" font-size="10" text-anchor="middle" fill="#222">2'</text>
<text transform="translate(2045,2175) rotate(-90)" font-size="10" text-anchor="middle" fill="#222">2'</text>
<text transform="translate(2045,2206) rotate(-90)" font-size="10" text-anchor="middle" fill="#222">2'</text>
<text transform="translate(2045,2237) rotate(-90)" font-size="10" text-anchor="middle" fill="#222">2'</text>
<text x="2075" y="2182" font-size="12.5" fill="#222" textLength="137" lengthAdjust="spacingAndGlyphs">2X8 FRAMING CUT DOWN TO</text>
<text x="2075" y="2196" font-size="12.5" fill="#222" textLength="135" lengthAdjust="spacingAndGlyphs">6" FOR 1" THK ACRYLIC TO</text>
<text x="2075" y="2210" font-size="12.5" fill="#222" textLength="24" lengthAdjust="spacingAndGlyphs">REST</text>
<path d="M2070 2191 H2062 L1958 2236" stroke="#222" stroke-width="1.2"/><path d="M1955 2238 L1970 2226 L1973 2233Z" fill="#222"/>
<path d="M1818 2052 L1815 2070 L1803 2086" stroke="#222" stroke-width="1.2"/>
<text x="1103" y="2204" font-size="12.5" fill="#222" textLength="111" lengthAdjust="spacingAndGlyphs">2X6 FLOOR JOISTS 24"</text>
<text x="1084" y="2224" font-size="12.5" fill="#222" textLength="130" lengthAdjust="spacingAndGlyphs">O.C.E.W. CUT DOWN TO 4⅞"</text>
<path d="M1219 2208 H1226 L1270 2236" stroke="#222" stroke-width="1.2"/><path d="M1272 2238 L1256 2232 L1261 2226Z" fill="#222"/>
<g stroke="#555" stroke-width="1"><path d="M1270 2140 L1290 2118 M1292 2110 L1312 2088 M1320 2080 L1340 2058"/></g>
<text transform="translate(1283,2128) rotate(-55)" font-size="10" fill="#335" text-anchor="middle">1'-11⅝"</text>
<path d="M2335.5 2040 V2240 M2525 2040 V2240 M2645 2040 V2240 M2765.5 2040 V2240 M2335.5 2080.2 H2765.5 M2335.5 2117.5 H2765.5 M2335.5 2155 H2765.5 M2335.5 2192.3 H2765.5 M2335.5 2230 H2765.5 M2335.5 2268 H2765.5 M2765.5 2060.4 H2911 M2911 2040 V2240" stroke="#111" stroke-width="1.6"/>
<text x="2430.2" y="2065.1" font-size="12" text-anchor="middle" fill="#111">DOUBLE TOP PLATES</text>
<text x="2585.0" y="2065.1" font-size="12" text-anchor="middle" fill="#111">16d COMMON</text>
<text x="2705.2" y="2065.1" font-size="12" text-anchor="middle" fill="#111">@ 18" FACE NAIL</text>
<text x="2430.2" y="2097.0" font-size="12" text-anchor="middle" fill="#111">TOP PLATES: LAPS &amp;</text>
<text x="2430.2" y="2109.7" font-size="12" text-anchor="middle" fill="#111">INTERSECTIONS</text>
<text x="2585.0" y="2103.3" font-size="12" text-anchor="middle" fill="#111">16d COMMON</text>
<text x="2705.2" y="2103.3" font-size="12" text-anchor="middle" fill="#111">2 FACE NAIL</text>
<text x="2430.2" y="2134.4" font-size="12" text-anchor="middle" fill="#111">CONTINUOUS HEADER; TWO</text>
<text x="2430.2" y="2147.1" font-size="12" text-anchor="middle" fill="#111">PIECE</text>
<text x="2585.0" y="2140.8" font-size="12" text-anchor="middle" fill="#111">16d COMMON</text>
<text x="2705.2" y="2134.4" font-size="12" text-anchor="middle" fill="#111">@16" FACE NAIL</text>
<text x="2705.2" y="2147.1" font-size="12" text-anchor="middle" fill="#111">ALONG EACH EDGE</text>
<text x="2430.2" y="2171.8" font-size="12" text-anchor="middle" fill="#111">CEILING JOISTS TO PLATE, TOE</text>
<text x="2430.2" y="2184.5" font-size="12" text-anchor="middle" fill="#111">NAIL</text>
<text x="2585.0" y="2178.2" font-size="12" text-anchor="middle" fill="#111">8d COMMON</text>
<text x="2705.2" y="2178.2" font-size="12" text-anchor="middle" fill="#111">3 TOE NAIL</text>
<text x="2430.2" y="2209.3" font-size="12" text-anchor="middle" fill="#111">CONTINUOUS: HEADER TO</text>
<text x="2430.2" y="2222.0" font-size="12" text-anchor="middle" fill="#111">STUDS, TOE NAIL</text>
<text x="2585.0" y="2215.7" font-size="12" text-anchor="middle" fill="#111">8d COMMON</text>
<text x="2705.2" y="2215.7" font-size="12" text-anchor="middle" fill="#111">4 TOE NAIL</text>
<text x="2430.2" y="2253.5" font-size="12" text-anchor="middle" fill="#111">CEILING JOISTS, LAPS OVER</text>
<text x="2585.0" y="2253.5" font-size="12" text-anchor="middle" fill="#111"></text>
<text x="2705.2" y="2253.5" font-size="12" text-anchor="middle" fill="#111"></text>
<text transform="translate(2825,2117) rotate(-90)" font-size="23" fill="#111" text-anchor="end">FLOOR AND RAMP</text>
<text transform="translate(2846,2158) rotate(-90)" font-size="23" fill="#111" text-anchor="end">COLOR FACTORY</text>
<text transform="translate(2867,2172) rotate(-90)" font-size="23" fill="#111" text-anchor="end">HOUSTON, TX</text>
</g></svg>
<div class="t" style="left:3140px;top:2111px;font-size:32px;color:#444">Adobe Sign</div>
<div class="t" style="left:3140px;top:2204px;font-size:32px;color:#444">Fill &amp; Sign</div>
<div class="a" style="left:3314px;top:2085px;width:137px;height:27px;background:#2e6fc4;border-radius:3px"></div>
<div class="t" style="left:3328px;top:2088px;font-size:21px;font-weight:bold;color:#fff">FEATURED</div>
<svg style="left:3077px;top:2105px" width="38" height="44" viewBox="0 0 38 44"><path d="M3 3 H27 L35 11 V41 H3Z" fill="none" stroke="#a040c0" stroke-width="3.6" stroke-linejoin="round"/><path d="M9 12 H22 M9 17 H28 M9 22 H28" stroke="#a040c0" stroke-width="2"/><path d="M10 27 H16 V34 L13 37 L10 34Z" fill="#a040c0"/><path d="M21 30 L27 36 M27 30 L21 36" stroke="#a040c0" stroke-width="2.4"/></svg>
<svg style="left:3070px;top:2193px" width="56" height="47" viewBox="0 0 56 47"><path d="M8 44 L4 36 L30 4 A5 5 0 0 1 38 10 L12 42Z" fill="#ecdcf4" stroke="#9a48d8" stroke-width="3.4" stroke-linejoin="round"/><path d="M4 46 Q30 30 30 40 Q34 30 40 38 Q44 34 50 40" fill="none" stroke="#9a48d8" stroke-width="3.4"/></svg>
<div class="a" style="left:3077px;top:2040px;width:38px;height:14px;background:#b04a90;border-radius:0 0 3px 3px"></div>
<div class="a" style="left:104px;top:1523px;width:1300px;height:70px;background:linear-gradient(rgba(0,0,0,.32),rgba(0,0,0,.12) 60%,rgba(0,0,0,0))"></div><!-- chrome window -->
<div class="a" style="left:0;top:1521px;width:1808px;height:3px;background:#1a1a1a"></div>
<div class="a" style="left:0;top:145px;width:1808px;height:1378px;background:#fff;border-radius:0 12px 0 0;overflow:hidden;box-shadow:0 0 30px rgba(0,0,0,.5)">
<div class="a" style="left:0;top:0;width:1808px;height:83px;background:#3c3e42;border-top:1px solid #6a6b6e"></div>
<div class="a" style="left:342px;top:15px;width:189px;height:70px;background:#35363a;border-radius:14px 14px 0 0"></div>
<div class="a" style="left:0;top:83px;width:1808px;height:74px;background:#35363a"></div>
<div class="a" style="left:94px;top:91px;width:1371px;height:56px;background:#202124;border-radius:28px"></div>
<div class="a" style="left:1485px;top:91px;width:240px;height:56px;background:#232427;border-radius:28px;border:2px solid #404145"></div>
</div>
<svg style="left:-6px;top:178px" width="32" height="32"><rect x="0" y="0" width="32" height="32" rx="4" fill="#f2b632"/><rect x="4" y="9" width="24" height="14" fill="#fff"/></svg><div class="t" style="left:43px;top:180px;font-size:28px;color:#b8babd;width:69px;overflow:hidden;-webkit-mask-image:linear-gradient(90deg,#000 60%,transparent)">NYC Design</div><svg style="left:117px;top:185px" width="18" height="18"><path d="M2 2 L16 16 M16 2 L2 16" stroke="#b8babd" stroke-width="2.6"/></svg><div class="a" style="left:157px;top:175px;width:2px;height:39px;background:#67696d"></div><svg style="left:181px;top:179px" width="30" height="27" viewBox="0 0 30 27"><path d="M10 0 H20 L30 17 L25 26Z" fill="#f9c631" /><path d="M10 0 L0 17 L5 26 L15 9Z" fill="#1fa463"/><path d="M5 26 L10 17 H30 L25 26Z" fill="#4688f4"/></svg><div class="t" style="left:230px;top:180px;font-size:28px;color:#b8babd;width:68px;overflow:hidden;-webkit-mask-image:linear-gradient(90deg,#000 60%,transparent)">Design Files</div><svg style="left:303px;top:185px" width="18" height="18"><path d="M2 2 L16 16 M16 2 L2 16" stroke="#b8babd" stroke-width="2.6"/></svg><svg style="left:366px;top:178px" width="32" height="32"><rect x="0" y="0" width="32" height="32" rx="4" fill="#f2b632"/><rect x="4" y="9" width="24" height="14" fill="#fff"/></svg><div class="t" style="left:415px;top:180px;font-size:28px;color:#e8eaed;width:69px;overflow:hidden;-webkit-mask-image:linear-gradient(90deg,#000 60%,transparent)">CF_Houston</div><svg style="left:489px;top:185px" width="18" height="18"><path d="M2 2 L16 16 M16 2 L2 16" stroke="#e8eaed" stroke-width="2.6"/></svg><svg style="left:553px;top:178px" width="32" height="32"><rect x="0" y="0" width="32" height="32" rx="4" fill="#22a45d"/><rect x="4" y="11" width="24" height="4" fill="#fff"/><rect x="11" y="4" width="4" height="24" fill="#fff"/></svg><div class="t" style="left:600px;top:180px;font-size:28px;color:#b8babd;width:69px;overflow:hidden;-webkit-mask-image:linear-gradient(90deg,#000 60%,transparent)">*COLOR</div><svg style="left:674px;top:185px" width="18" height="18"><path d="M2 2 L16 16 M16 2 L2 16" stroke="#b8babd" stroke-width="2.6"/></svg><div class="a" style="left:714px;top:175px;width:2px;height:39px;background:#67696d"></div><svg style="left:738px;top:178px" width="32" height="32"><rect x="0" y="0" width="32" height="32" rx="4" fill="#22a45d"/><rect x="4" y="11" width="24" height="4" fill="#fff"/><rect x="11" y="4" width="4" height="24" fill="#fff"/></svg><div class="t" style="left:786px;top:180px;font-size:28px;color:#b8babd;width:67px;overflow:hidden;-webkit-mask-image:linear-gradient(90deg,#000 60%,transparent)">Color Factory</div><svg style="left:858px;top:185px" width="18" height="18"><path d="M2 2 L16 16 M16 2 L2 16" stroke="#b8babd" stroke-width="2.6"/></svg><div class="a" style="left:898px;top:175px;width:2px;height:39px;background:#67696d"></div><svg style="left:922px;top:177px" width="32" height="34"><rect x="0" y="2" width="32" height="32" rx="3" fill="#3b6ee0"/><rect x="0" y="2" width="32" height="7" fill="#c7d3f0"/><text x="16" y="29" font-family="Liberation Sans" font-size="17" fill="#fff" text-anchor="middle">14</text></svg><div class="t" style="left:970px;top:180px;font-size:28px;color:#b8babd;width:68px;overflow:hidden;-webkit-mask-image:linear-gradient(90deg,#000 60%,transparent)">Color Factory</div><svg style="left:1043px;top:185px" width="18" height="18"><path d="M2 2 L16 16 M16 2 L2 16" stroke="#b8babd" stroke-width="2.6"/></svg><div class="a" style="left:1082px;top:175px;width:2px;height:39px;background:#67696d"></div><svg style="left:1106px;top:178px" width="32" height="32"><rect x="0" y="0" width="32" height="32" rx="4" fill="#f2b632"/><rect x="4" y="9" width="24" height="14" fill="#fff"/></svg><div class="t" style="left:1154px;top:180px;font-size:28px;color:#b8babd;width:68px;overflow:hidden;-webkit-mask-image:linear-gradient(90deg,#000 60%,transparent)">CF_NYC</div><svg style="left:1227px;top:185px" width="18" height="18"><path d="M2 2 L16 16 M16 2 L2 16" stroke="#b8babd" stroke-width="2.6"/></svg><div class="a" style="left:1267px;top:175px;width:2px;height:39px;background:#67696d"></div><svg style="left:1289px;top:178px" width="32" height="32"><rect x="0" y="0" width="32" height="32" rx="4" fill="#f2b632"/><rect x="4" y="9" width="24" height="14" fill="#fff"/></svg><div class="t" style="left:1339px;top:180px;font-size:28px;color:#b8babd;width:67px;overflow:hidden;-webkit-mask-image:linear-gradient(90deg,#000 60%,transparent)">Color Factory</div><svg style="left:1411px;top:185px" width="18" height="18"><path d="M2 2 L16 16 M16 2 L2 16" stroke="#b8babd" stroke-width="2.6"/></svg><div class="a" style="left:1451px;top:175px;width:2px;height:39px;background:#67696d"></div><svg style="left:1474px;top:178px" width="32" height="32"><circle cx="16" cy="16" r="16" fill="#b5d14f"/></svg><div class="t" style="left:1522px;top:180px;font-size:28px;color:#b8babd;width:68px;overflow:hidden;-webkit-mask-image:linear-gradient(90deg,#000 60%,transparent)">Project</div><svg style="left:1595px;top:185px" width="18" height="18"><path d="M2 2 L16 16 M16 2 L2 16" stroke="#b8babd" stroke-width="2.6"/></svg><div class="a" style="left:1635px;top:175px;width:2px;height:39px;background:#67696d"></div><svg style="left:1665px;top:179px" width="30" height="30"><path d="M15 1 V29 M1 15 H29" stroke="#b8babd" stroke-width="3.2"/></svg><svg style="left:37px;top:248px" width="28" height="30" viewBox="0 0 28 30"><path d="M3 14 L14 3 L25 14 M6 11 V27 H22 V11" fill="none" stroke="#9aa0a6" stroke-width="3"/></svg><svg style="left:121px;top:252px" width="18" height="24"><path d="M4 11 V7 A5 5 0 0 1 14 7 V11" fill="none" stroke="#e8eaed" stroke-width="2.6"/><rect x="1" y="10" width="16" height="13" rx="2" fill="#e8eaed"/></svg><div class="t" style="left:162px;top:249px;font-size:30px;color:#e8eaed">docs.google.com<span style="color:#9aa0a6;letter-spacing:-0.5px">/presentation/d/1dBsbSo_QPKWD6_Uloz3NUP08rOGHbiYvjJ2Wd2w...</span></div><svg style="left:1351px;top:248px" width="32" height="32"><circle cx="13" cy="13" r="10" fill="none" stroke="#b8babd" stroke-width="2.6"/><path d="M8 13 H18 M20 20 L29 29" stroke="#b8babd" stroke-width="2.6"/></svg><svg style="left:1416px;top:247px" width="32" height="32" viewBox="0 0 32 32"><path d="M16 2 L20 12 L30 12 L22 19 L25 30 L16 23 L7 30 L10 19 L2 12 L12 12Z" fill="none" stroke="#b8babd" stroke-width="2.4"/></svg><svg style="left:1490px;top:242px" width="44" height="44"><circle cx="22" cy="22" r="22" fill="#5f6368"/><path d="M10 20 H34 M14 19 L17 9 H27 L30 19" stroke="#35363a" stroke-width="3" fill="#35363a"/><circle cx="16" cy="30" r="5" fill="none" stroke="#35363a" stroke-width="2.5"/><circle cx="28" cy="30" r="5" fill="none" stroke="#35363a" stroke-width="2.5"/></svg><div class="t" style="left:1549px;top:250px;font-size:29px;color:#e8eaed">Incognito (2)</div><svg style="left:1750px;top:250px" width="28" height="28"><circle cx="14" cy="14" r="14" fill="#e0776c"/><path d="M14 6 L21 14 H17 V22 H11 V14 H7Z" fill="#fff"/></svg>
<!-- google slides UI -->
<div class="t" style="left:-1px;top:325px;font-size:32px;color:#202124">Houston_Design_Working</div>
<svg style="left:405px;top:326px" width="32" height="32" viewBox="0 0 32 32"><path d="M16 3 L19.5 12 L29 12.5 L21.5 18.5 L24 28 L16 22.5 L8 28 L10.5 18.5 L3 12.5 L12.5 12Z" fill="none" stroke="#5f6368" stroke-width="2.4" stroke-linejoin="round"/></svg>
<svg style="left:459px;top:330px" width="30" height="24"><path d="M2 3 H11 L14 6 H28 V22 H2Z" fill="none" stroke="#5f6368" stroke-width="2.4"/><path d="M9 14 H20 M16 10 L20 14 L16 18" fill="none" stroke="#5f6368" stroke-width="2.4"/></svg>
<svg style="left:512px;top:328px" width="32" height="26"><path d="M8 23 A7 7 0 0 1 7 9 A10 10 0 0 1 25 9 A7 7 0 0 1 25 23Z" fill="none" stroke="#5f6368" stroke-width="2.4"/><path d="M11 15 L15 19 L22 12" fill="none" stroke="#5f6368" stroke-width="2.4"/></svg>
<div class="t" style="left:9px;top:377px;font-size:25px;color:#202124">Edit</div>
<div class="t" style="left:78px;top:377px;font-size:25px;color:#202124">View</div>
<div class="t" style="left:160px;top:377px;font-size:25px;color:#202124">Insert</div>
<div class="t" style="left:252px;top:377px;font-size:25px;color:#202124">Format</div>
<div class="t" style="left:360px;top:377px;font-size:25px;color:#202124">Slide</div>
<div class="t" style="left:443px;top:377px;font-size:25px;color:#202124">Arrange</div>
<div class="t" style="left:559px;top:377px;font-size:25px;color:#202124">Tools</div>
<div class="t" style="left:647px;top:377px;font-size:25px;color:#202124">Add-ons</div>
<div class="t" style="left:769px;top:377px;font-size:25px;color:#202124">Help</div>
<div class="t" style="left:860px;top:377px;font-size:25px;color:#5f6368"><span style="text-decoration:underline">Last edit was 9 </span>...</div>
<svg style="left:1114px;top:345px" width="40" height="26"><path d="M2 24 L13 13 L20 20 L36 4 M27 3 H37 V13" fill="none" stroke="#5f6368" stroke-width="3.2"/></svg>
<svg style="left:1207px;top:341px" width="37" height="36"><path d="M3 0 H34 A3 3 0 0 1 37 3 V36 L29 28 H3 A3 3 0 0 1 0 25 V3 A3 3 0 0 1 3 0Z" fill="#5f6368"/><path d="M7 8 H30 M7 14 H30 M7 20 H30" stroke="#fff" stroke-width="2.6"/></svg>
<div class="a" style="left:1280px;top:329px;width:80px;height:62px;border:2px solid #dadce0;border-radius:8px"></div>
<svg style="left:1306px;top:346px" width="30" height="28"><rect x="2" y="2" width="26" height="24" fill="none" stroke="#202124" stroke-width="3.4"/><path d="M11 8 L20 14 L11 20Z" fill="#202124"/></svg>
<div class="a" style="left:0;top:419px;width:1326px;height:2px;background:#dadce0"></div>
<div class="a" style="left:0;top:488px;width:1326px;height:2px;background:#dadce0"></div>
<!-- toolbar -->
<svg style="left:0;top:430px" width="660" height="50" viewBox="0 0 660 50">
<path d="M4 23 Q15 8 28 18" fill="none" stroke="#5f6368" stroke-width="3.6"/><path d="M31 13 V26 H19Z" fill="#5f6368"/>
<rect x="59" y="1" width="18" height="6" fill="#5f6368"/><path d="M54 12 H82 V26 H76 V33 H60 V26 H54Z" fill="#5f6368"/><rect x="62" y="22" width="12" height="6" fill="#fff"/>
<rect x="108" y="2" width="18" height="9" rx="1" fill="#c6c8cb"/><path d="M126 6 H131 V15 H117 V26" fill="none" stroke="#c6c8cb" stroke-width="3"/>
<rect x="150" y="6" width="2" height="35" fill="#dadce0"/>
<circle cx="186" cy="16" r="9.5" fill="none" stroke="#5f6368" stroke-width="3"/><path d="M186 11 V21 M181 16 H191 M193 23 L201 31" stroke="#5f6368" stroke-width="3"/>
<path d="M221 18 H235 L228 25Z" fill="#5f6368"/>
<rect x="250" y="6" width="2" height="35" fill="#dadce0"/>
<rect x="262" y="0" width="46" height="48" rx="4" fill="#feefc3"/>
<path d="M278 10 L278 34 L284 28 L289 38 L293 36 L288 26 L296 26Z" fill="#202124"/>
<rect x="322" y="7" width="28" height="28" fill="none" stroke="#5f6368" stroke-width="2.6"/><g fill="#fff" stroke="#5f6368" stroke-width="2"><rect x="319" y="4" width="6" height="6"/><rect x="347" y="4" width="6" height="6"/><rect x="319" y="32" width="6" height="6"/><rect x="347" y="32" width="6" height="6"/></g><path d="M329 14 H343 M336 14 V29" stroke="#5f6368" stroke-width="3.4"/>
<rect x="371" y="6" width="28" height="28" rx="2" fill="none" stroke="#5f6368" stroke-width="3.2"/><path d="M376 28 L383 20 L388 25 L392 21 L396 28Z" fill="#5f6368"/>
<path d="M408 18 H422 L415 25Z" fill="#5f6368"/>
<circle cx="456" cy="16" r="10" fill="none" stroke="#5f6368" stroke-width="3"/><path d="M465 14 H472 V32 H452 V27" fill="none" stroke="#5f6368" stroke-width="3"/>
<path d="M503 7 L523 29" stroke="#5f6368" stroke-width="3.4"/><circle cx="503" cy="7" r="4" fill="#5f6368"/><circle cx="523" cy="29" r="4" fill="#5f6368"/>
<path d="M546 18 H560 L553 25Z" fill="#5f6368"/>
<rect x="576" y="6" width="2" height="35" fill="#dadce0"/>
<path d="M598 4 H626 V28 H606 L598 36Z" fill="none" stroke="#5f6368" stroke-width="3"/><path d="M612 9 V23 M605 16 H619" stroke="#5f6368" stroke-width="3"/>
<rect x="644" y="6" width="2" height="35" fill="#dadce0"/>
</svg>
<div class="t" style="left:665px;top:441px;font-size:21px;font-weight:bold;color:#3c4043">Background</div>
<div class="a" style="left:799px;top:436px;width:2px;height:35px;background:#dadce0"></div>
<div class="t" style="left:820px;top:441px;font-size:21px;font-weight:bold;color:#3c4043">Layout</div>
<svg style="left:889px;top:449px" width="16" height="10"><path d="M1 1 H15 L8 8Z" fill="#3c4043"/></svg>
<div class="a" style="left:921px;top:436px;width:2px;height:35px;background:#dadce0"></div>
<div class="t" style="left:939px;top:441px;font-size:21px;font-weight:bold;color:#3c4043">Theme</div>
<div class="a" style="left:1025px;top:436px;width:2px;height:35px;background:#dadce0"></div>
<div class="t" style="left:1045px;top:441px;font-size:21px;font-weight:bold;color:#3c4043">Transition</div>
<!-- filmstrip & canvas -->
<div class="a" style="left:208px;top:490px;width:2px;height:1033px;background:#dadce0"></div>
<div class="a" style="left:210px;top:490px;width:1116px;height:1018px;background:#f8f9fa"></div>
<div class="a" style="left:210px;top:490px;width:1116px;height:24px;background:#fff;border-bottom:2px solid #dadce0"></div>
<div class="a" style="left:210px;top:490px;width:25px;height:1018px;background:#fff;border-right:2px solid #dadce0"></div>
<div class="a" style="left:210px;top:490px;width:25px;height:24px;background:#f1f3f4"></div>
<div class="a" style="left:210px;top:514px;width:25px;height:75px;background:#dadce0"></div>
<div class="a" style="left:235px;top:490px;width:35px;height:24px;background:#dadce0"></div>
<div class="a" style="left:210px;top:1437px;width:25px;height:71px;background:#e8eaed"></div>
<div class="a" style="left:210px;top:1508px;width:1116px;height:15px;background:#fff;border-top:2px solid #dadce0"></div>


<div class="a" style="left:185px;top:1014px;width:13px;height:34px;background:#dadce0;border-radius:6px"></div>
<svg style="left:990px;top:1511px" width="40" height="8"><circle cx="4" cy="4" r="3" fill="#dadce0"/><circle cx="14" cy="4" r="3" fill="#dadce0"/><circle cx="24" cy="4" r="3" fill="#dadce0"/></svg>
<!-- slide -->
<div class="a" style="left:267px;top:587px;width:1100px;height:850px;background:#fff;box-shadow:0 0 0 1.5px #d2d4d7"></div>
<div class="a" style="left:267px;top:641px;width:1100px;height:2px;background:#595959"></div>
<div class="t" style="left:302px;top:669px;font-size:25px;font-weight:bold;color:#111;transform:scaleX(0.83);transform-origin:0 0">ICE CREAM HALLWAY (EXPERIENCE 13)</div>
<svg style="left:235px;top:490px" width="1091" height="24"><rect x="50.9" y="14" width="1.5" height="4" fill="#80868b"/><rect x="69.8" y="14" width="1.5" height="4" fill="#80868b"/><rect x="88.7" y="14" width="1.5" height="4" fill="#80868b"/><rect x="107.6" y="11" width="1.5" height="9" fill="#80868b"/><rect x="126.5" y="14" width="1.5" height="4" fill="#80868b"/><rect x="145.4" y="14" width="1.5" height="4" fill="#80868b"/><rect x="164.3" y="14" width="1.5" height="4" fill="#80868b"/><text x="183.2" y="19" font-family="Liberation Sans" font-size="17" fill="#3c4043" text-anchor="middle">1</text><rect x="202.1" y="14" width="1.5" height="4" fill="#80868b"/><rect x="221.0" y="14" width="1.5" height="4" fill="#80868b"/><rect x="239.9" y="14" width="1.5" height="4" fill="#80868b"/><rect x="258.8" y="11" width="1.5" height="9" fill="#80868b"/><rect x="277.7" y="14" width="1.5" height="4" fill="#80868b"/><rect x="296.6" y="14" width="1.5" height="4" fill="#80868b"/><rect x="315.5" y="14" width="1.5" height="4" fill="#80868b"/><text x="334.4" y="19" font-family="Liberation Sans" font-size="17" fill="#3c4043" text-anchor="middle">2</text><rect x="353.3" y="14" width="1.5" height="4" fill="#80868b"/><rect x="372.2" y="14" width="1.5" height="4" fill="#80868b"/><rect x="391.1" y="14" width="1.5" height="4" fill="#80868b"/><rect x="410.0" y="11" width="1.5" height="9" fill="#80868b"/><rect x="428.9" y="14" width="1.5" height="4" fill="#80868b"/><rect x="447.8" y="14" width="1.5" height="4" fill="#80868b"/><rect x="466.7" y="14" width="1.5" height="4" fill="#80868b"/><text x="485.6" y="19" font-family="Liberation Sans" font-size="17" fill="#3c4043" text-anchor="middle">3</text><rect x="504.5" y="14" width="1.5" height="4" fill="#80868b"/><rect x="523.4" y="14" width="1.5" height="4" fill="#80868b"/><rect x="542.3" y="14" width="1.5" height="4" fill="#80868b"/><rect x="561.2" y="11" width="1.5" height="9" fill="#80868b"/><rect x="580.1" y="14" width="1.5" height="4" fill="#80868b"/><rect x="599.0" y="14" width="1.5" height="4" fill="#80868b"/><rect x="617.9" y="14" width="1.5" height="4" fill="#80868b"/><text x="636.8" y="19" font-family="Liberation Sans" font-size="17" fill="#3c4043" text-anchor="middle">4</text><rect x="655.7" y="14" width="1.5" height="4" fill="#80868b"/><rect x="674.6" y="14" width="1.5" height="4" fill="#80868b"/><rect x="693.5" y="14" width="1.5" height="4" fill="#80868b"/><rect x="712.4" y="11" width="1.5" height="9" fill="#80868b"/><rect x="731.3" y="14" width="1.5" height="4" fill="#80868b"/><rect x="750.2" y="14" width="1.5" height="4" fill="#80868b"/><rect x="769.1" y="14" width="1.5" height="4" fill="#80868b"/><text x="788.0" y="19" font-family="Liberation Sans" font-size="17" fill="#3c4043" text-anchor="middle">5</text><rect x="806.9" y="14" width="1.5" height="4" fill="#80868b"/><rect x="825.8" y="14" width="1.5" height="4" fill="#80868b"/><rect x="844.7" y="14" width="1.5" height="4" fill="#80868b"/><rect x="863.6" y="11" width="1.5" height="9" fill="#80868b"/><rect x="882.5" y="14" width="1.5" height="4" fill="#80868b"/><rect x="901.4" y="14" width="1.5" height="4" fill="#80868b"/><rect x="920.3" y="14" width="1.5" height="4" fill="#80868b"/><text x="939.2" y="19" font-family="Liberation Sans" font-size="17" fill="#3c4043" text-anchor="middle">6</text><rect x="958.1" y="14" width="1.5" height="4" fill="#80868b"/><rect x="977.0" y="14" width="1.5" height="4" fill="#80868b"/><rect x="995.9" y="14" width="1.5" height="4" fill="#80868b"/><rect x="1014.8" y="11" width="1.5" height="9" fill="#80868b"/><rect x="1033.7" y="14" width="1.5" height="4" fill="#80868b"/><rect x="1052.6" y="14" width="1.5" height="4" fill="#80868b"/><rect x="1071.5" y="14" width="1.5" height="4" fill="#80868b"/><text x="1090.4" y="19" font-family="Liberation Sans" font-size="17" fill="#3c4043" text-anchor="middle">7</text></svg><svg style="left:210px;top:514px" width="25" height="994"><rect x="8" y="91.9" width="4" height="1.5" fill="#80868b"/><rect x="8" y="110.8" width="4" height="1.5" fill="#80868b"/><rect x="8" y="129.7" width="4" height="1.5" fill="#80868b"/><rect x="5" y="148.6" width="9" height="1.5" fill="#80868b"/><rect x="8" y="167.5" width="4" height="1.5" fill="#80868b"/><rect x="8" y="186.4" width="4" height="1.5" fill="#80868b"/><rect x="8" y="205.3" width="4" height="1.5" fill="#80868b"/><text x="0" y="0" transform="translate(19,224.2) rotate(-90)" font-family="Liberation Sans" font-size="17" fill="#3c4043" text-anchor="middle">1</text><rect x="8" y="243.1" width="4" height="1.5" fill="#80868b"/><rect x="8" y="262.0" width="4" height="1.5" fill="#80868b"/><rect x="8" y="280.9" width="4" height="1.5" fill="#80868b"/><rect x="5" y="299.8" width="9" height="1.5" fill="#80868b"/><rect x="8" y="318.7" width="4" height="1.5" fill="#80868b"/><rect x="8" y="337.6" width="4" height="1.5" fill="#80868b"/><rect x="8" y="356.5" width="4" height="1.5" fill="#80868b"/><text x="0" y="0" transform="translate(19,375.4) rotate(-90)" font-family="Liberation Sans" font-size="17" fill="#3c4043" text-anchor="middle">2</text><rect x="8" y="394.3" width="4" height="1.5" fill="#80868b"/><rect x="8" y="413.2" width="4" height="1.5" fill="#80868b"/><rect x="8" y="432.1" width="4" height="1.5" fill="#80868b"/><rect x="5" y="451.0" width="9" height="1.5" fill="#80868b"/><rect x="8" y="469.9" width="4" height="1.5" fill="#80868b"/><rect x="8" y="488.8" width="4" height="1.5" fill="#80868b"/><rect x="8" y="507.7" width="4" height="1.5" fill="#80868b"/><text x="0" y="0" transform="translate(19,526.6) rotate(-90)" font-family="Liberation Sans" font-size="17" fill="#3c4043" text-anchor="middle">3</text><rect x="8" y="545.5" width="4" height="1.5" fill="#80868b"/><rect x="8" y="564.4" width="4" height="1.5" fill="#80868b"/><rect x="8" y="583.3" width="4" height="1.5" fill="#80868b"/><rect x="5" y="602.2" width="9" height="1.5" fill="#80868b"/><rect x="8" y="621.1" width="4" height="1.5" fill="#80868b"/><rect x="8" y="640.0" width="4" height="1.5" fill="#80868b"/><rect x="8" y="658.9" width="4" height="1.5" fill="#80868b"/><text x="0" y="0" transform="translate(19,677.8) rotate(-90)" font-family="Liberation Sans" font-size="17" fill="#3c4043" text-anchor="middle">4</text><rect x="8" y="696.7" width="4" height="1.5" fill="#80868b"/><rect x="8" y="715.6" width="4" height="1.5" fill="#80868b"/><rect x="8" y="734.5" width="4" height="1.5" fill="#80868b"/><rect x="5" y="753.4" width="9" height="1.5" fill="#80868b"/><rect x="8" y="772.3" width="4" height="1.5" fill="#80868b"/><rect x="8" y="791.2" width="4" height="1.5" fill="#80868b"/><rect x="8" y="810.1" width="4" height="1.5" fill="#80868b"/><text x="0" y="0" transform="translate(19,829.0) rotate(-90)" font-family="Liberation Sans" font-size="17" fill="#3c4043" text-anchor="middle">5</text><rect x="8" y="847.9" width="4" height="1.5" fill="#80868b"/><rect x="8" y="866.8" width="4" height="1.5" fill="#80868b"/><rect x="8" y="885.7" width="4" height="1.5" fill="#80868b"/><rect x="5" y="904.6" width="9" height="1.5" fill="#80868b"/></svg>
<!-- filmstrip cards -->
<div class="a" style="left:-20px;top:490px;width:187px;height:55px;border:3px solid #dadce0;border-top:none;border-radius:0 0 12px 12px;background:#fff"></div>
<svg style="left:0;top:489px" width="140" height="45"><g fill="none" stroke="#bbb" stroke-width="1"><path d="M12 5 Q10 20 25 18 Q38 17 38 5"/><path d="M48 40 Q80 30 95 10 L105 0 M80 40 L100 5 M110 0 L135 40 M115 15 H140"/><path d="M88 25 L100 30"/></g></svg>
<div class="a" style="left:-20px;top:569px;width:187px;height:160px;border:3px solid #dadce0;border-radius:12px;background:#fff"></div>
<div class="a" style="left:0;top:582px;width:139px;height:1px;background:#dadce0"></div>
<svg style="left:144px;top:574px" width="16" height="16"><circle cx="8" cy="8" r="6" fill="none" stroke="#bbb" stroke-width="1.5" stroke-dasharray="2 1.5"/></svg>
<svg style="overflow:hidden;left:0;top:597px" width="140" height="121" viewBox="0 0 140 121"><g fill="none" stroke="#9a9a9a" stroke-width="0.9">
<path d="M0 38 L45 12 L140 30 M45 12 V35 M70 20 V40 M90 8 L140 25 L120 50 M95 20 L100 45 M0 80 Q60 100 70 70 Q72 50 30 45 Q0 40 0 50 M5 60 V85 M28 55 V80 M0 115 L60 95 L140 60 M60 95 L80 121 M110 30 V120 M120 50 V110 M50 120 L140 85"/>
<ellipse cx="14" cy="65" rx="12" ry="6"/><ellipse cx="14" cy="80" rx="12" ry="6"/>
</g><g fill="#222"><rect x="0" y="28" width="38" height="8" transform="rotate(-20 0 28)"/></g></svg>
<div class="a" style="left:-20px;top:752px;width:187px;height:161px;border:3px solid #dadce0;border-radius:12px;background:#fff"></div>
<div class="a" style="left:0;top:765px;width:139px;height:1px;background:#dadce0"></div>
<svg style="left:144px;top:757px" width="16" height="16"><circle cx="8" cy="8" r="6" fill="none" stroke="#bbb" stroke-width="1.5" stroke-dasharray="2 1.5"/></svg>
<svg style="overflow:hidden;left:0;top:780px" width="139" height="122" viewBox="0 0 139 122"><rect width="139" height="122" fill="#0d0d18"/><rect y="106" width="139" height="16" fill="#141838"/>
<path d="M-10 106 V60 A42 42 0 0 1 73 60 V106Z" fill="#222"/><path d="M12 106 V62 A22 22 0 0 1 55 62 V106Z" fill="#d8d8d8"/>
<path d="M-10 106 L20 85 H48 L73 106Z" fill="#9a9a9a"/>
<g fill="none" stroke="#ccc" stroke-width="1.3"><path d="M-8 70 A40 40 0 0 1 72 70"/><path d="M0 70 A33 33 0 0 1 66 70"/><path d="M6 70 A27 27 0 0 1 60 70"/></g>
<ellipse cx="4" cy="80" rx="3" ry="13" fill="#d05040"/><ellipse cx="10" cy="80" rx="2" ry="10" fill="#e07a60"/><ellipse cx="52" cy="80" rx="2.5" ry="10" fill="#2a30b0"/><ellipse cx="57" cy="78" rx="3" ry="13" fill="#3a6a2a"/><ellipse cx="62" cy="78" rx="4" ry="16" fill="#9ac8a0"/>
<rect x="26" y="66" width="10" height="22" fill="#eee"/><path d="M20 75 h4 v14 h-4z" fill="#333"/></svg>
<div class="a" style="left:-20px;top:935px;width:187px;height:162px;border:3px solid #dadce0;border-radius:12px;background:#fff"></div>
<div class="a" style="left:0;top:949px;width:139px;height:1px;background:#dadce0"></div>
<svg style="left:144px;top:941px" width="16" height="16"><circle cx="8" cy="8" r="6" fill="none" stroke="#bbb" stroke-width="1.5" stroke-dasharray="2 1.5"/></svg>
<svg style="overflow:hidden;left:0;top:976px" width="142" height="95" viewBox="0 0 142 95"><rect width="139" height="94" fill="#0a0a0a"/><rect x="0" y="12" width="96" height="12" fill="#222"/>
<rect x="0" y="27" width="68" height="5" fill="#e0a090"/><rect x="32" y="27" width="22" height="5" fill="#f0e0c0"/>
<path d="M0 34 H122 A12 29 0 0 1 122 92 H0Z" fill="#b8b8b8"/><g fill="none" stroke="#777" stroke-width="0.8"><path d="M30 34 V92 M70 34 V92 M100 34 V92"/></g>
<ellipse cx="20" cy="91" rx="14" ry="3" fill="#2a5a20"/><ellipse cx="50" cy="91" rx="14" ry="3" fill="#2a30c0"/><ellipse cx="88" cy="91" rx="14" ry="3" fill="#b090b0"/>
<rect x="0" y="94" width="142" height="2" fill="#000"/></svg>
<div class="a" style="left:-20px;top:1118px;width:187px;height:162px;border:3px solid #dadce0;border-radius:12px;background:#fff"></div>
<div class="a" style="left:0;top:1132px;width:139px;height:1px;background:#dadce0"></div>
<svg style="left:144px;top:1124px" width="16" height="16"><circle cx="8" cy="8" r="6" fill="none" stroke="#bbb" stroke-width="1.5" stroke-dasharray="2 1.5"/></svg>
<svg style="overflow:hidden;left:0;top:1145px" width="150" height="120" viewBox="0 0 150 120"><path d="M0 30 L15 20 L29 30 L0 70Z" fill="#ddd" stroke="#999"/><path d="M0 40 L15 25 L25 35 L5 60Z" fill="#666"/>
<path d="M33 70 L110 10 L145 30 L145 45 L80 113 L35 90Z" fill="#111"/><path d="M145 45 L80 113 L88 115 L148 50Z" fill="#bbb"/>
<path d="M50 80 L110 28 L125 40 L65 95Z" fill="#c8c8c8"/>
<ellipse cx="58" cy="80" rx="6" ry="9" fill="#b090b0"/><ellipse cx="72" cy="68" rx="5" ry="9" fill="#2a30c0"/><ellipse cx="85" cy="57" rx="5" ry="9" fill="#2a5a20"/><ellipse cx="97" cy="47" rx="5" ry="9" fill="#9ac8a0"/><ellipse cx="116" cy="33" rx="8" ry="9" fill="#eee"/>
<path d="M92 70 L112 58 L115 68 L95 82Z" fill="#e08a70"/>
<rect x="33" y="70" width="12" height="20" fill="#c04080"/><rect x="33" y="76" width="12" height="3" fill="#e0c030"/><rect x="33" y="82" width="12" height="3" fill="#3050c0"/></svg>
<div class="a" style="left:-20px;top:1293px;width:196px;height:161px;background:#fdf0c9;border-radius:0 12px 0 0"></div>
<div class="a" style="left:-20px;top:1301px;width:187px;height:200px;border:4px solid #f29900;border-radius:12px;background:#fff"></div>
<div class="a" style="left:0;top:1315px;width:139px;height:1px;background:#dadce0"></div>
<svg style="left:144px;top:1307px" width="16" height="16"><circle cx="8" cy="8" r="6" fill="none" stroke="#bbb" stroke-width="1.5" stroke-dasharray="2 1.5"/></svg>
<svg style="overflow:hidden;left:0;top:1331px" width="139" height="122" viewBox="0 0 139 122"><defs><linearGradient id="thw" x1="0" y1="0" x2="0" y2="1"><stop offset="0" stop-color="#8a8a8a"/><stop offset="0.5" stop-color="#c8c8c8"/><stop offset="1" stop-color="#e8e8e8"/></linearGradient></defs>
<rect width="139" height="122" fill="#141414"/><path d="M0 0 H45 L20 18 H0Z" fill="#000"/>
<path d="M0 52 H139 V122 H0Z" fill="url(#thw)"/>
<path d="M0 26 A13 13 0 0 1 13 40 V52 H0Z" fill="#d0d0d0"/>
<path d="M0 100 L0 72 L10 76 L82 122 H0Z" fill="#ababab"/><path d="M10 76 L82 122 H74 L6 80Z" fill="#8a8a8a"/>
<g fill="none" stroke="#9a9a9a" stroke-width="1.2"><path d="M-10 52 A40 50 0 0 1 47 50"/><path d="M-5 60 A30 40 0 0 1 28 55"/><path d="M60 -5 Q88 20 88 52"/><path d="M0 10 A50 60 0 0 1 78 30"/></g>
<g stroke="#666" stroke-width="0.8"><path d="M27 60 V93 M46 62 V103 M86 60 V122"/></g>
<ellipse cx="22.5" cy="52" rx="4.5" ry="19" fill="#a985a2"/><ellipse cx="37.5" cy="52" rx="7.5" ry="25" fill="#2420b4"/><ellipse cx="66" cy="53" rx="16" ry="37" fill="#30501d"/><ellipse cx="139" cy="60" rx="45" ry="63" fill="#97b597"/>
<path d="M120 40 Q108 70 125 110" fill="none" stroke="#7a9a7a" stroke-width="0.8"/>
<path d="M10 57 C14 57 15 62 12 64 L12 75 L13 88 L10 108 L5 108 L7 90 L4 78 L0 75 V66 L6 66 C5 62 7 57 10 57Z" fill="#333"/></svg>
<div class="a" style="left:0;top:1454px;width:208px;height:69px;background:#fff;border-top:2px solid #dadce0"></div><svg style="left:94px;top:1480px" width="26" height="20"><g fill="#757575"><rect x="0" y="0" width="7.5" height="8.5"/><rect x="9" y="0" width="7.5" height="8.5"/><rect x="18" y="0" width="7.5" height="8.5"/><rect x="0" y="10.5" width="7.5" height="8.5"/><rect x="9" y="10.5" width="7.5" height="8.5"/><rect x="18" y="10.5" width="7.5" height="8.5"/></g></svg>
<svg style="left:411px;top:717px" width="915" height="683" viewBox="0 0 915 683">
<defs>
<clipPath id="imgclip"><rect width="915" height="683"/></clipPath>
<linearGradient id="wallL" x1="0" y1="0" x2="0" y2="1"><stop offset="0" stop-color="#9a9a9a"/><stop offset="0.45" stop-color="#c8c8c8"/><stop offset="1" stop-color="#ededed"/></linearGradient>
<linearGradient id="wallR" x1="0" y1="0" x2="0" y2="1"><stop offset="0" stop-color="#8e8e8e"/><stop offset="0.35" stop-color="#bdbdbd"/><stop offset="1" stop-color="#e8e8e8"/></linearGradient>
<pattern id="ribs" width="4" height="10" patternUnits="userSpaceOnUse"><rect width="4" height="10" fill="none"/><rect x="0" width="1.3" height="10" fill="#555" opacity="0.35"/></pattern>
<pattern id="speck" width="6" height="6" patternUnits="userSpaceOnUse"><rect width="6" height="6" fill="#b4b4b4"/><circle cx="1.5" cy="1.5" r="0.9" fill="#5a5a5a"/><circle cx="4.5" cy="4" r="0.7" fill="#7a7a7a"/></pattern>
</defs>
<g clip-path="url(#imgclip)">
<rect width="915" height="683" fill="#141414"/>
<path d="M227 0 H708 L522 135 L260 128Z" fill="#000"/>
<path d="M260 128 L522 135 L520 426 L263 433Z" fill="#161616"/>
<path d="M260 292.5 A130 149.5 0 0 1 520 292.5 V433 H260Z" fill="#d3d3d3"/>
<rect x="263" y="295" width="257" height="138" fill="#bdbdbd"/><rect x="263" y="295" width="257" height="138" fill="url(#ribs)"/>
<path d="M151 307 L263 295 V433 L198 683 H122Z" fill="url(#wallL)"/><path d="M151 307 L263 295 V433 L198 683 H122Z" fill="url(#ribs)" opacity="0.5"/>
<path d="M520 293 L915 307 V683 L520 426Z" fill="url(#wallR)"/><path d="M520 293 L915 307 V683 L520 426Z" fill="url(#ribs)" opacity="0.6"/>
<path d="M265 433 L520 426 L915 683 H198Z" fill="url(#speck)"/>
<path d="M520 426 L545 426 L915 650 V683 H880 L520 440Z" fill="#8c8c8c" opacity="0.8"/><path d="M265 433 L520 426 L543 441 L257 450Z" fill="#8f8f8f"/>
<clipPath id="floorclip"><path d="M265 433 L520 426 L915 683 H198Z"/></clipPath><g clip-path="url(#floorclip)" fill="none" stroke="#8c8c8c" stroke-width="3"><path d="M200 639 Q480 665 760 590"/><path d="M240 526 Q470 535 620 500"/><path d="M255 464 Q450 472 545 445"/></g>
<g stroke="#555" stroke-width="1.2"><path d="M171 305 V683 M226 302 V575 M247 300 V494 M591 296 V472 M627 296 V496 M705 300 V546 M779 303 V594"/></g>
<rect x="342" y="213" width="103" height="220" fill="#e4e4e4" stroke="#666" stroke-width="1.2"/><rect x="348" y="218" width="86" height="213" fill="#dadada" stroke="#888" stroke-width="1"/>
<circle cx="389" cy="278" r="18" fill="#eee" stroke="#666" stroke-width="2"/>
<path d="M373 278 A16 16 0 0 1 405 278Z" fill="#a9b6bd"/><path d="M373 278 A16 16 0 0 0 405 278Z" fill="#9a6a8a"/>
<rect x="420" y="310" width="8" height="36" fill="#ccc" stroke="#777"/>
<g><rect x="432" y="220" width="7" height="20" fill="#d8b040"/><rect x="432" y="240" width="7" height="25" fill="#3f7a34"/><rect x="432" y="265" width="7" height="25" fill="#9ab2bd"/><rect x="432" y="290" width="7" height="25" fill="#8a5a8a"/><rect x="432" y="315" width="7" height="25" fill="#b04a30"/><rect x="432" y="340" width="7" height="25" fill="#2830b0"/><rect x="432" y="365" width="7" height="22" fill="#d07a60"/><rect x="432" y="387" width="7" height="39" fill="#fafafa"/></g>
<path d="M0 0 H121 Q181 341 121 683 H0Z" fill="#a0372a"/>
<path d="M79 683 L122 600 L128 683Z" fill="#e55a3c"/>
<ellipse cx="195" cy="302" rx="20" ry="236" fill="#c46352" stroke="#555" stroke-width="2"/>
<path d="M190 460 Q205 500 195 538 Q183 520 186 480Z" fill="#f0907c"/>
<ellipse cx="232" cy="299" rx="11" ry="155" fill="#cf8e7b" stroke="#555" stroke-width="1.5"/>
<ellipse cx="253" cy="300" rx="6" ry="115" fill="#d9c452" stroke="#555" stroke-width="1.2"/>
<ellipse cx="572" cy="298" rx="25" ry="113" fill="#a985a2" stroke="#444" stroke-width="1.5"/>
<ellipse cx="656" cy="298" rx="43.5" ry="145" fill="#2420b4" stroke="#222" stroke-width="1.5"/>
<path d="M688 190 Q668 290 684 440" fill="none" stroke="#111" stroke-width="1.2"/><path d="M658 152 L914 52" stroke="#0a0a0a" stroke-width="1.2"/>
<ellipse cx="819.5" cy="306" rx="93.5" ry="213" fill="#30501d" stroke="#333" stroke-width="1.5"/>
<path d="M865 118 Q790 300 855 480" fill="none" stroke="#111" stroke-width="1.2"/>
<g fill="none" stroke="#7b7b7b" stroke-linecap="round">
<path d="M158 312 A391.5 527 0 0 1 941 312" stroke-width="7"/>
<path d="M217.6 299 A247.6 295 0 0 1 712.8 299" stroke-width="6"/>
<path d="M243.8 295 A179.6 212 0 0 1 603 295" stroke-width="5"/>
<path d="M258 292.5 A141.7 179 0 0 1 541.4 292.5" stroke-width="4.5"/>
</g>
<g fill="none" stroke="#bdbdbd" stroke-width="1.5">
<path d="M158 312 A391.5 527 0 0 1 941 312"/><path d="M217.6 299 A247.6 295 0 0 1 712.8 299"/><path d="M243.8 295 A179.6 212 0 0 1 603 295"/>
</g>
<path d="M339 262 C352 262 354 275 350 282 L347 289 L362 300 Q368 315 371 337 L359 340 L359 361 L348 394 L362 444 L364 448 L342 455 L341 426 L333 462 L312 458 L317 451 L328 396 L319 346 L309 369 L302 364 L303 355 L317 323 L323 298 L332 288 C326 280 327 262 339 262Z" fill="#2e2f30"/><path d="M510 326 C524 328 532 340 530 355 L528 371 L505 385 L506 394 L512 487 L503 494 L495 532 L518 577 L524 590 L488 610 L457 609 L475 587 L466 530 L467 492 L462 486 L464 437 L447 437 L436 429 L440 420 L456 424 L465 410 L472 394 L460 389 L442 384 L446 379 L477 382 L496 382 L488 370 L477 361 L480 346 L493 331Z" fill="#2e2f30"/></g></svg>
<!-- main acrobat window -->
<div class="a" style="left:1290px;top:2050px;width:2192px;height:120px;background:linear-gradient(rgba(0,0,0,.3),rgba(0,0,0,.12) 40%,rgba(0,0,0,0));-webkit-mask-image:linear-gradient(90deg,transparent,#000 50px)"></div>
<div class="a" style="left:1326px;top:274px;width:2300px;height:1778px;background:#fff;border-radius:12px 0 0 12px;box-shadow:0 10px 45px rgba(0,0,0,.5);overflow:hidden">
<div class="a" style="left:0;top:0;width:2300px;height:44px;background:linear-gradient(#ececec,#d6d6d6);border-bottom:1px solid #b9b9b9"></div>
<div class="a" style="left:0;top:44px;width:2300px;height:72px;background:#e9e9e9;border-bottom:2px solid #cfcfcf"></div>
<div class="a" style="left:325px;top:44px;width:361px;height:74px;background:#f8f8f8;border-left:2px solid #d2d2d2;border-right:2px solid #d2d2d2"></div>
<div class="a" style="left:0;top:116px;width:2300px;height:93px;background:#fafafa;border-bottom:2px solid #cfcfcf"></div>
<div class="a" style="left:0;top:209px;width:88px;height:1570px;background:#fafafa"></div>
<div class="a" style="left:88px;top:209px;width:2px;height:1570px;background:#c9c9c9"></div>
<div class="a" style="left:90px;top:209px;width:36px;height:1570px;background:#e8e8e8"></div>
<div class="a" style="left:126px;top:1748px;width:2200px;height:30px;background:#f3f3f3;border-top:1px solid #dadada"></div>
<div class="a" style="left:126px;top:1748px;width:246px;height:30px;background:#e6e6e6"></div>
</div>
<div class="a" style="left:1342px;top:284px;width:24px;height:24px;border-radius:50%;background:#ee6a5e;border:1px solid #d65548"></div>
<div class="a" style="left:1382px;top:284px;width:24px;height:24px;border-radius:50%;background:#f5bd4f;border:1px solid #d9a03a"></div>
<div class="a" style="left:1422px;top:284px;width:24px;height:24px;border-radius:50%;background:#61c454;border:1px solid #4ea83f"></div>
<svg style="left:2584px;top:282px" width="24" height="30" viewBox="0 0 24 30"><path d="M1 1 H16 L23 8 V29 H1Z" fill="#fff" stroke="#bbb"/><rect x="5" y="9" width="14" height="14" fill="#222"/><path d="M8 20 Q12 12 12 11 Q13 16 17 19 Q11 17 8 20Z" fill="none" stroke="#fff" stroke-width="1.2"/></svg>
<div class="t" style="left:2620px;top:284px;font-size:25.5px;color:#3a3a3a">COLOR FACTORY_ICE CREAM HALLWAY_COMPLETE_9-30-2019.pdf</div>
<div class="t" style="left:1359px;top:336px;font-size:35px;color:#444">Home</div>
<div class="t" style="left:1512px;top:336px;font-size:35px;color:#444">Tools</div>
<div class="t" style="left:1711px;top:342px;font-size:29px;color:#2b2b2b">COLOR FACTOR...</div>
<svg style="left:1976px;top:348px" width="16" height="16"><path d="M2 2 L14 14 M14 2 L2 14" stroke="#444" stroke-width="3"/></svg>
<div class="t" style="left:1492px;top:2029px;font-size:22px;color:#222">36.00 x 24.00 in</div>
<div class="a" style="left:1704px;top:2029px;width:1694px;height:17px;background:#c3c3c3;border-radius:9px"></div>
<svg style="left:1426px;top:1255px" width="16" height="24"><path d="M2 12 L14 1 V23Z" fill="#707070"/></svg>
<!-- left rail icons -->
<svg style="left:1350px;top:528px" width="44" height="46" viewBox="0 0 44 46"><path d="M12 11 H2 V42 H26 V35" fill="none" stroke="#727272" stroke-width="3.6" stroke-linejoin="round"/><path d="M12 2 H31 L40 11 V34 H12Z" fill="#fafafa" stroke="#727272" stroke-width="3.6" stroke-linejoin="round"/><path d="M29 2 V13 H40" fill="none" stroke="#727272" stroke-width="3.2"/></svg>
<svg style="left:1355px;top:622px" width="30" height="46"><path d="M2 2 H27 V43 L14.5 30 L2 43Z" fill="none" stroke="#727272" stroke-width="3.6" stroke-linejoin="round"/></svg>
<svg style="left:1349px;top:712px" width="42" height="44" viewBox="0 0 42 44"><path d="M30 18 L14 34 A7 7 0 0 1 4 24 L22 6 A5 5 0 0 1 30 13 L14 29 A2.5 2.5 0 0 1 10 25 L24 11" fill="none" stroke="#727272" stroke-width="3.6" stroke-linecap="round"/></svg>
<!-- toolbar icons -->
<svg style="left:1355px;top:416px" width="42" height="42" viewBox="0 0 42 42"><path d="M3 5 A2 2 0 0 1 5 3 H30 L39 12 V37 A2 2 0 0 1 37 39 H5 A2 2 0 0 1 3 37Z" fill="none" stroke="#b5b5b5" stroke-width="3.4"/><rect x="11" y="3" width="16" height="11" fill="none" stroke="#b5b5b5" stroke-width="3"/><rect x="20" y="6" width="3" height="5" fill="#b5b5b5"/><rect x="10" y="24" width="22" height="15" fill="#b5b5b5"/><rect x="13" y="27" width="16" height="10" fill="#fafafa"/></svg>
<svg style="left:1440px;top:413px" width="48" height="46" viewBox="0 0 48 46"><path d="M24 3 L30 18 L46 18 L33 28 L38 44 L24 34 L10 44 L15 28 L2 18 L18 18Z" fill="none" stroke="#6e6e6e" stroke-width="3.2" stroke-linejoin="miter"/></svg>
<svg style="left:1530px;top:415px" width="46" height="44" viewBox="0 0 46 44"><path d="M12 32 H10 A8 8 0 0 1 9 16 A14 14 0 0 1 36 13 A10 10 0 0 1 36 32 H33" fill="none" stroke="#6e6e6e" stroke-width="3.6"/><path d="M23 43 V20 M15 28 L23 20 L31 28" fill="none" stroke="#6e6e6e" stroke-width="3.6"/></svg>
<svg style="left:1616px;top:414px" width="44" height="44" viewBox="0 0 44 44"><rect x="9" y="2" width="26" height="12" rx="2" fill="none" stroke="#6e6e6e" stroke-width="3.4"/><path d="M2 16 A4 4 0 0 1 6 12 H38 A4 4 0 0 1 42 16 V32 H36 V42 H8 V32 H2Z" fill="#6e6e6e"/><rect x="11" y="26" width="22" height="13" fill="#fafafa"/><path d="M15 30 H29 M15 35 H29" stroke="#6e6e6e" stroke-width="2.2"/><circle cx="36" cy="18" r="2" fill="#fafafa"/></svg>
<svg style="left:1706px;top:414px" width="46" height="46" viewBox="0 0 46 46"><circle cx="19" cy="19" r="16" fill="none" stroke="#6e6e6e" stroke-width="3.6"/><path d="M31 31 L43 43" stroke="#6e6e6e" stroke-width="4.2" stroke-linecap="round"/><circle cx="12" cy="19" r="2.6" fill="#6e6e6e"/><circle cx="19" cy="19" r="2.6" fill="#6e6e6e"/><circle cx="26" cy="19" r="2.6" fill="#6e6e6e"/></svg>
<svg style="left:2242px;top:415px" width="42" height="42"><circle cx="21" cy="21" r="18.5" fill="none" stroke="#b8b8b8" stroke-width="3.4"/><path d="M21 32 V11 M12 19 L21 10 L30 19" fill="none" stroke="#b8b8b8" stroke-width="3.4"/></svg>
<svg style="left:2331px;top:415px" width="42" height="42"><circle cx="21" cy="21" r="18.5" fill="none" stroke="#6e6e6e" stroke-width="3.4"/><path d="M21 10 V31 M12 23 L21 32 L30 23" fill="none" stroke="#6e6e6e" stroke-width="3.4"/></svg>
<div class="t" style="left:2436px;top:424px;font-size:26px;color:#333">1</div>
<div class="a" style="left:2416px;top:462px;width:68px;height:2px;background:#c8c8c8"></div>
<div class="t" style="left:2495px;top:427px;font-size:26px;color:#333">/&nbsp; 4</div>
<div class="a" style="left:2582px;top:408px;width:2px;height:55px;background:#c8c8c8"></div>
<svg style="left:2637px;top:413px" width="30" height="46"><path d="M3 2 L27 24 L16 25 L22 42 L16 44 L11 28 L3 36Z" fill="#2a7bd4"/></svg>
<svg style="left:2714px;top:412px" width="48" height="50" viewBox="0 0 48 50"><path d="M12 28 V12 A3.5 3.5 0 0 1 19 12 V24 M19 24 V7 A3.5 3.5 0 0 1 26 7 V24 M26 24 V9 A3.5 3.5 0 0 1 33 9 V25 M33 25 V14 A3.5 3.5 0 0 1 40 14 V32 Q40 47 26 47 Q16 47 10 38 L3 27 A3.5 3.5 0 0 1 9 23 L12 28" fill="none" stroke="#6e6e6e" stroke-width="3.2" stroke-linejoin="round"/></svg>
<svg style="left:2801px;top:414px" width="44" height="44"><circle cx="22" cy="22" r="19.5" fill="none" stroke="#6e6e6e" stroke-width="3.6"/><path d="M12 22 H32" stroke="#6e6e6e" stroke-width="3.6"/></svg>
<svg style="left:2889px;top:414px" width="44" height="44"><circle cx="22" cy="22" r="19.5" fill="none" stroke="#6e6e6e" stroke-width="3.6"/><path d="M12 22 H32 M22 12 V32" stroke="#6e6e6e" stroke-width="3.6"/></svg>
<div class="t" style="left:2996px;top:425px;font-size:26px;color:#333">50%</div>
<svg style="left:3105px;top:430px" width="18" height="12"><path d="M1 1 H17 L9 10Z" fill="#6e6e6e"/></svg>
<div class="a" style="left:2976px;top:462px;width:160px;height:2px;background:#c8c8c8"></div>
<svg style="left:3182px;top:412px" width="62" height="50" viewBox="0 0 62 50"><path d="M2 2 V12 H34 V2" fill="none" stroke="#6e6e6e" stroke-width="3.4"/><path d="M2 48 V20 H26 L34 28 V48" fill="none" stroke="#6e6e6e" stroke-width="3.4"/><path d="M8 38 H28 M12 33 L7 38 L12 43 M24 33 L29 38 L24 43" fill="none" stroke="#6e6e6e" stroke-width="2.6"/><path d="M44 22 H56 L50 29Z" fill="#6e6e6e"/></svg>
<svg style="left:3288px;top:415px" width="48" height="46" viewBox="0 0 48 46"><rect x="3" y="3" width="42" height="16" rx="3" fill="none" stroke="#6e6e6e" stroke-width="3.4"/><path d="M11 8 V12 M18 8 V12 M25 8 V12 M32 8 V12 M38 8 V12" stroke="#6e6e6e" stroke-width="2.6"/><path d="M24 21 V43 M15 34 L24 43 L33 34" fill="none" stroke="#6e6e6e" stroke-width="3.4"/></svg>
<div class="a" style="left:3376px;top:408px;width:2px;height:55px;background:#c8c8c8"></div>
<svg style="left:3420px;top:414px" width="44" height="46" viewBox="0 0 44 46"><path d="M4 3 H40 A2 2 0 0 1 42 5 V31 A2 2 0 0 1 40 33 H22 L14 43 V33 H4 A2 2 0 0 1 2 31 V5 A2 2 0 0 1 4 3Z" fill="none" stroke="#6e6e6e" stroke-width="3.4" stroke-linejoin="round"/><path d="M10 13 H34 M10 20 H34 M10 26 H26" stroke="#6e6e6e" stroke-width="2.4"/></svg>
<svg style="left:3506px;top:413px" width="50" height="48" viewBox="0 0 50 48"><path d="M12 30 L36 5 A4 4 0 0 1 43 11 L19 36 L9 38Z" fill="none" stroke="#6e6e6e" stroke-width="3.4" stroke-linejoin="round"/><path d="M9 38 L3 44 H13Z" fill="#6e6e6e"/><rect x="14" y="40" width="34" height="7" fill="#e2e2e2"/></svg>
<svg style="left:0;top:0" width="3584" height="2240" viewBox="0 0 3584 2240">
<defs>
<clipPath id="pgclip"><rect x="1452" y="484" width="2132" height="1538"/></clipPath>
<pattern id="stripes" x="0.5" y="0" width="10.15" height="40" patternUnits="userSpaceOnUse"><rect x="0" y="0" width="1.7" height="40" fill="#7a2fd0"/></pattern>
</defs>
<g clip-path="url(#pgclip)" font-family="Liberation Sans" fill="none">
<rect x="1452" y="484" width="2132" height="1538" fill="#fff"/>
<rect x="1520.5" y="484" width="3" height="1538" fill="#000"/><rect x="1531" y="484" width="2" height="1538" fill="#000"/>
<rect x="1698" y="484" width="1900" height="2" fill="#3ee03e"/>
<path d="M1698 968 V677 H3600" fill="none" stroke="#3ee03e" stroke-width="2"/>
<mask id="m677"><rect x="1708" y="977" width="1892" height="230" fill="#fff"/><circle cx="2110" cy="968" r="177" fill="#000"/><circle cx="2511" cy="968" r="177" fill="#000"/><circle cx="2912" cy="968" r="177" fill="#000"/><circle cx="3313" cy="968" r="177" fill="#000"/></mask><rect x="1708" y="977" width="1892" height="230" fill="url(#stripes)" mask="url(#m677)"/><path d="M1698 968 H1942" stroke="#555" stroke-width="1.5"/><path d="M2278 968 H2343" stroke="#555" stroke-width="1.5"/><path d="M2679 968 H2744" stroke="#555" stroke-width="1.5"/><path d="M3080 968 H3145" stroke="#555" stroke-width="1.5"/><path d="M3481 968 H3600" stroke="#555" stroke-width="1.5"/><path d="M1708.0 977 H1933.2" stroke="#555" stroke-width="1.5"/><path d="M2286.8 977 H2334.2" stroke="#555" stroke-width="1.5"/><path d="M2687.8 977 H2735.2" stroke="#555" stroke-width="1.5"/><path d="M3088.8 977 H3136.2" stroke="#555" stroke-width="1.5"/><path d="M3489.8 977 H3600.0" stroke="#555" stroke-width="1.5"/><path d="M1708 1207 H3600 M1698 1216 H3600 M1698 968 V1216" stroke="#555" stroke-width="1.5" fill="none"/><path d="M1708 977 V1207" stroke="#555" stroke-width="1.2"/><path d="M1933.2 977 A177 177 0 0 0 2286.8 977" fill="none" stroke="#5a4a6a" stroke-width="2"/><path d="M1942 968 A168 168 0 0 1 2278 968" fill="none" stroke="#2ee02e" stroke-width="2"/><path d="M1942 968 A168 168 0 0 0 2278 968" fill="none" stroke="#2a8a2a" stroke-width="2"/><path d="M2334.2 977 A177 177 0 0 0 2687.8 977" fill="none" stroke="#5a4a6a" stroke-width="2"/><path d="M2343 968 A168 168 0 0 1 2679 968" fill="none" stroke="#2ee02e" stroke-width="2"/><path d="M2343 968 A168 168 0 0 0 2679 968" fill="none" stroke="#2a8a2a" stroke-width="2"/><path d="M2735.2 977 A177 177 0 0 0 3088.8 977" fill="none" stroke="#5a4a6a" stroke-width="2"/><path d="M2744 968 A168 168 0 0 1 3080 968" fill="none" stroke="#2ee02e" stroke-width="2"/><path d="M2744 968 A168 168 0 0 0 3080 968" fill="none" stroke="#2a8a2a" stroke-width="2"/><path d="M3136.2 977 A177 177 0 0 0 3489.8 977" fill="none" stroke="#5a4a6a" stroke-width="2"/><path d="M3145 968 A168 168 0 0 1 3481 968" fill="none" stroke="#2ee02e" stroke-width="2"/><path d="M3145 968 A168 168 0 0 0 3481 968" fill="none" stroke="#2a8a2a" stroke-width="2"/><path d="M1905.0 968 V1216 M1914.0 968 V1207" stroke="#555" stroke-width="1.3"/><path d="M2306.0 968 V1216 M2315.0 968 V1207" stroke="#555" stroke-width="1.3"/><path d="M2707.0 968 V1216 M2716.0 968 V1207" stroke="#555" stroke-width="1.3"/><path d="M3108.0 968 V1216 M3117.0 968 V1207" stroke="#555" stroke-width="1.3"/><path d="M3509.0 968 V1216 M3518.0 968 V1207" stroke="#555" stroke-width="1.3"/><rect x="1678" y="1156.5" width="1920" height="1.8" fill="#000"/><rect x="1677" y="1150.5" width="9" height="14" fill="#000"/>
<rect x="1905.0" y="693" width="9" height="275" fill="#2ad0e0" stroke="#444" stroke-width="1.3"/><rect x="1908.3" y="693" width="2.4" height="275" fill="#fff" opacity="0.6"/><rect x="1905.5" y="693" width="8" height="8" fill="#3040e0"/>
<rect x="1902.5" y="913" width="2" height="55" fill="#e02424"/>
<rect x="2306.0" y="693" width="9" height="275" fill="#2ad0e0" stroke="#444" stroke-width="1.3"/><rect x="2309.3" y="693" width="2.4" height="275" fill="#fff" opacity="0.6"/><rect x="2306.5" y="693" width="8" height="8" fill="#3040e0"/>
<rect x="2316.5" y="913" width="2" height="55" fill="#e02424"/>
<rect x="2707.0" y="693" width="9" height="275" fill="#2ad0e0" stroke="#444" stroke-width="1.3"/><rect x="2710.3" y="693" width="2.4" height="275" fill="#fff" opacity="0.6"/><rect x="2707.5" y="693" width="8" height="8" fill="#3040e0"/>
<rect x="2717.5" y="913" width="2" height="55" fill="#e02424"/>
<rect x="3108.0" y="693" width="9" height="275" fill="#2ad0e0" stroke="#444" stroke-width="1.3"/><rect x="3111.3" y="693" width="2.4" height="275" fill="#fff" opacity="0.6"/><rect x="3108.5" y="693" width="8" height="8" fill="#3040e0"/>
<rect x="3118.5" y="913" width="2" height="55" fill="#e02424"/>
<rect x="3509.0" y="693" width="9" height="275" fill="#2ad0e0" stroke="#444" stroke-width="1.3"/><rect x="3512.3" y="693" width="2.4" height="275" fill="#fff" opacity="0.6"/><rect x="3509.5" y="693" width="8" height="8" fill="#3040e0"/>
<rect x="3519.5" y="913" width="2" height="55" fill="#e02424"/>
<path d="M1699 1934 V1394 H3600 M1730 1394 V1934 M1699 1549 H1730 M1699 1934 H1730" fill="none" stroke="#3ee03e" stroke-width="2"/>
<mask id="m1394"><rect x="1748" y="1695" width="1852" height="230" fill="#fff"/><circle cx="2114.5" cy="1687" r="177" fill="#000"/><circle cx="2515.5" cy="1687" r="177" fill="#000"/><circle cx="2916.5" cy="1687" r="177" fill="#000"/><circle cx="3317.5" cy="1687" r="177" fill="#000"/></mask><rect x="1748" y="1695" width="1852" height="230" fill="url(#stripes)" mask="url(#m1394)"/><path d="M1730 1687 H1946.5" stroke="#555" stroke-width="1.5"/><path d="M2282.5 1687 H2347.5" stroke="#555" stroke-width="1.5"/><path d="M2683.5 1687 H2748.5" stroke="#555" stroke-width="1.5"/><path d="M3084.5 1687 H3149.5" stroke="#555" stroke-width="1.5"/><path d="M3485.5 1687 H3600" stroke="#555" stroke-width="1.5"/><path d="M1748.0 1695 H1937.7" stroke="#555" stroke-width="1.5"/><path d="M2291.3 1695 H2338.7" stroke="#555" stroke-width="1.5"/><path d="M2692.3 1695 H2739.7" stroke="#555" stroke-width="1.5"/><path d="M3093.3 1695 H3140.7" stroke="#555" stroke-width="1.5"/><path d="M3494.3 1695 H3600.0" stroke="#555" stroke-width="1.5"/><path d="M1748 1925 H3600 M1730 1934 H3600 M1730 1687 V1934" stroke="#555" stroke-width="1.5" fill="none"/><path d="M1748 1695 V1925" stroke="#555" stroke-width="1.2"/><path d="M1937.7 1695 A177 177 0 0 0 2291.3 1695" fill="none" stroke="#5a4a6a" stroke-width="2"/><path d="M1946.5 1687 A168 168 0 0 1 2282.5 1687" fill="none" stroke="#2ee02e" stroke-width="2"/><path d="M1946.5 1687 A168 168 0 0 0 2282.5 1687" fill="none" stroke="#2a8a2a" stroke-width="2"/><path d="M2338.7 1695 A177 177 0 0 0 2692.3 1695" fill="none" stroke="#5a4a6a" stroke-width="2"/><path d="M2347.5 1687 A168 168 0 0 1 2683.5 1687" fill="none" stroke="#2ee02e" stroke-width="2"/><path d="M2347.5 1687 A168 168 0 0 0 2683.5 1687" fill="none" stroke="#2a8a2a" stroke-width="2"/><path d="M2739.7 1695 A177 177 0 0 0 3093.3 1695" fill="none" stroke="#5a4a6a" stroke-width="2"/><path d="M2748.5 1687 A168 168 0 0 1 3084.5 1687" fill="none" stroke="#2ee02e" stroke-width="2"/><path d="M2748.5 1687 A168 168 0 0 0 3084.5 1687" fill="none" stroke="#2a8a2a" stroke-width="2"/><path d="M3140.7 1695 A177 177 0 0 0 3494.3 1695" fill="none" stroke="#5a4a6a" stroke-width="2"/><path d="M3149.5 1687 A168 168 0 0 1 3485.5 1687" fill="none" stroke="#2ee02e" stroke-width="2"/><path d="M3149.5 1687 A168 168 0 0 0 3485.5 1687" fill="none" stroke="#2a8a2a" stroke-width="2"/><path d="M1909.0 1687 V1934 M1918.0 1687 V1925" stroke="#555" stroke-width="1.3"/><path d="M2310.0 1687 V1934 M2319.0 1687 V1925" stroke="#555" stroke-width="1.3"/><path d="M2711.0 1687 V1934 M2720.0 1687 V1925" stroke="#555" stroke-width="1.3"/><path d="M3112.0 1687 V1934 M3121.0 1687 V1925" stroke="#555" stroke-width="1.3"/><path d="M3513.0 1687 V1934 M3522.0 1687 V1925" stroke="#555" stroke-width="1.3"/>
<rect x="1909.0" y="1411" width="9" height="276" fill="#fff" stroke="#444" stroke-width="1.3"/><rect x="1911.0" y="1411" width="5" height="276" fill="#2a3ae0"/><rect x="1912.7" y="1420" width="1.6" height="267" fill="#fff"/>
<rect x="1918.5" y="1633" width="2" height="54" fill="#e02424"/>
<rect x="2310.0" y="1411" width="9" height="276" fill="#fff" stroke="#444" stroke-width="1.3"/><rect x="2312.0" y="1411" width="5" height="276" fill="#2a3ae0"/><rect x="2313.7" y="1420" width="1.6" height="267" fill="#fff"/>
<rect x="2319.5" y="1633" width="2" height="54" fill="#e02424"/>
<rect x="2711.0" y="1411" width="9" height="276" fill="#fff" stroke="#444" stroke-width="1.3"/><rect x="2713.0" y="1411" width="5" height="276" fill="#2a3ae0"/><rect x="2714.7" y="1420" width="1.6" height="267" fill="#fff"/>
<rect x="2720.5" y="1633" width="2" height="54" fill="#e02424"/>
<rect x="3112.0" y="1411" width="9" height="276" fill="#fff" stroke="#444" stroke-width="1.3"/><rect x="3114.0" y="1411" width="5" height="276" fill="#2a3ae0"/><rect x="3115.7" y="1420" width="1.6" height="267" fill="#fff"/>
<rect x="3121.5" y="1633" width="2" height="54" fill="#e02424"/>
<rect x="3513.0" y="1411" width="9" height="276" fill="#fff" stroke="#444" stroke-width="1.3"/><rect x="3515.0" y="1411" width="5" height="276" fill="#2a3ae0"/><rect x="3516.7" y="1420" width="1.6" height="267" fill="#fff"/>
<rect x="3522.5" y="1633" width="2" height="54" fill="#e02424"/>
<rect x="1730" y="1411" width="9" height="523" fill="#fff" stroke="#2a3ae0" stroke-width="1.6"/><rect x="1731.5" y="1411" width="2" height="523" fill="#8a3ad8"/><rect x="1736" y="1411" width="1.5" height="523" fill="#2a3ae0"/><rect x="1730" y="1411" width="9" height="12" fill="#5060e8"/><rect x="1730" y="1540" width="9" height="12" fill="#5060e8"/>
<path d="M3551 1411 V1934 M3530 1411 H3560 M3530 1934 H3560 M3540 1400 L3562 1422 M3540 1923 L3562 1945" stroke="#000" stroke-width="1.5"/>
<text transform="translate(3558,1668) rotate(-90)" font-size="16" text-anchor="middle" fill="#000">9'-6"</text>
<rect x="3546" y="1640" width="10" height="55" fill="#fff"/><text transform="translate(3558,1668) rotate(-90)" font-size="16" text-anchor="middle" fill="#000">9'-6"</text>
<text transform="translate(2113,1080) rotate(-90)" font-size="16" text-anchor="middle" fill="#000">Ø6'-1½"</text>
<path d="M2101 1115 L2100 1136 M2094 1131 L2106 1143" stroke="#555" stroke-width="1"/>
<text transform="translate(2514,1080) rotate(-90)" font-size="16" text-anchor="middle" fill="#000">Ø6'-1½"</text>
<path d="M2502 1115 L2501 1136 M2495 1131 L2507 1143" stroke="#555" stroke-width="1"/>
<text transform="translate(2915,1080) rotate(-90)" font-size="16" text-anchor="middle" fill="#000">Ø6'-1½"</text>
<path d="M2903 1115 L2902 1136 M2896 1131 L2908 1143" stroke="#555" stroke-width="1"/>
<text transform="translate(3316,1080) rotate(-90)" font-size="16" text-anchor="middle" fill="#000">Ø6'-1½"</text>
<path d="M3304 1115 L3303 1136 M3297 1131 L3309 1143" stroke="#555" stroke-width="1"/>
<path d="M2266.0 948 H2355.0" stroke="#000" stroke-width="1.5"/><path d="M2278.0 936 V960 M2270.0 956 L2286.0 940" stroke="#000" stroke-width="1.3"/><path d="M2310.5 936 V960 M2302.5 956 L2318.5 940" stroke="#000" stroke-width="1.3"/><path d="M2343.0 936 V960 M2335.0 956 L2351.0 940" stroke="#000" stroke-width="1.3"/><text x="2236.5" y="954" font-size="16" text-anchor="start" fill="#000">EQ</text><text x="2363.5" y="954" font-size="16" text-anchor="start" fill="#000">EQ</text>
<path d="M2667.0 948 H2756.0" stroke="#000" stroke-width="1.5"/><path d="M2679.0 936 V960 M2671.0 956 L2687.0 940" stroke="#000" stroke-width="1.3"/><path d="M2711.5 936 V960 M2703.5 956 L2719.5 940" stroke="#000" stroke-width="1.3"/><path d="M2744.0 936 V960 M2736.0 956 L2752.0 940" stroke="#000" stroke-width="1.3"/><text x="2637.5" y="954" font-size="16" text-anchor="start" fill="#000">EQ</text><text x="2764.5" y="954" font-size="16" text-anchor="start" fill="#000">EQ</text>
<path d="M3068.0 948 H3157.0" stroke="#000" stroke-width="1.5"/><path d="M3080.0 936 V960 M3072.0 956 L3088.0 940" stroke="#000" stroke-width="1.3"/><path d="M3112.5 936 V960 M3104.5 956 L3120.5 940" stroke="#000" stroke-width="1.3"/><path d="M3145.0 936 V960 M3137.0 956 L3153.0 940" stroke="#000" stroke-width="1.3"/><text x="3038.5" y="954" font-size="16" text-anchor="start" fill="#000">EQ</text><text x="3165.5" y="954" font-size="16" text-anchor="start" fill="#000">EQ</text>

<path d="M1757 946 H1767 M1757 946 V968" stroke="#000" stroke-width="1.3"/><text x="1772" y="952" font-size="16" text-anchor="start" fill="#000">2" TYP.</text>
<path d="M1752 960 L1766 974 M1752 970 L1766 984 M1757 968 V988" stroke="#000" stroke-width="1.2"/>
<path d="M1876 693 V940 M1866 693 H1930 M1868 685 L1884 701" stroke="#000" stroke-width="1.5"/>
<text transform="translate(1882,955) rotate(-90)" font-size="16" text-anchor="middle" fill="#000">9'-6"</text>
<path d="M1666 968 V1062 M1666 1122 V1216 M1650 968 H1690 M1650 1216 H1690 M1656 958 L1676 978 M1656 1206 L1676 1226" stroke="#000" stroke-width="1.5"/>
<text transform="translate(1672,1092) rotate(-90)" font-size="16" text-anchor="middle" fill="#000">4'-6⅛"</text>
<path d="M1876 968 V1216 M1866 1226 L1886 1206" stroke="#000" stroke-width="1.2"/>
<path d="M1766 887 L1806 887 L1851 971" fill="none" stroke="#6a6a6a" stroke-width="1.2"/><circle cx="1851" cy="971" r="4.5" fill="#000"/>
<path d="M1604 1057 L1644 1057 L1704 1017" fill="none" stroke="#6a6a6a" stroke-width="1.2"/><circle cx="1704" cy="1017" r="4.5" fill="#000"/>
<path d="M1641 1136 L1681 1136 L1726 1084" fill="none" stroke="#6a6a6a" stroke-width="1.2"/><circle cx="1726" cy="1084" r="4.5" fill="#000"/>
<path d="M1672 1274 L1712 1274 L1746 1212" fill="none" stroke="#6a6a6a" stroke-width="1.2"/><circle cx="1746" cy="1212" r="4.5" fill="#000"/>
<path d="M1831 1275 L1871 1275 L1908 1190" fill="none" stroke="#6a6a6a" stroke-width="1.2"/><circle cx="1908" cy="1190" r="4.5" fill="#000"/>
<path d="M1998 1274 L2038 1274 L2072 1212" fill="none" stroke="#6a6a6a" stroke-width="1.2"/><circle cx="2072" cy="1212" r="4.5" fill="#000"/>
<path d="M2235 1275 L2275 1275 L2312 1190" fill="none" stroke="#6a6a6a" stroke-width="1.2"/><circle cx="2312" cy="1190" r="4.5" fill="#000"/>
<path d="M2447 1274 L2487 1274 L2521 1212" fill="none" stroke="#6a6a6a" stroke-width="1.2"/><circle cx="2521" cy="1212" r="4.5" fill="#000"/>
<path d="M2640 1251 L2680 1251 L2713 1189" fill="none" stroke="#6a6a6a" stroke-width="1.2"/><circle cx="2713" cy="1189" r="4.5" fill="#000"/>
<path d="M2820 1252 L2860 1252 L2892 1211" fill="none" stroke="#6a6a6a" stroke-width="1.2"/><circle cx="2892" cy="1211" r="4.5" fill="#000"/>
<path d="M3041 1251 L3081 1251 L3114 1189" fill="none" stroke="#6a6a6a" stroke-width="1.2"/><circle cx="3114" cy="1189" r="4.5" fill="#000"/>
<path d="M3216 1274 L3256 1274 L3290 1212" fill="none" stroke="#6a6a6a" stroke-width="1.2"/><circle cx="3290" cy="1212" r="4.5" fill="#000"/>
<path d="M3444 1251 L3484 1251 L3516 1189" fill="none" stroke="#6a6a6a" stroke-width="1.2"/><circle cx="3516" cy="1189" r="4.5" fill="#000"/>
<path d="M3473 1310 L3513 1310 L3546 1211" fill="none" stroke="#6a6a6a" stroke-width="1.2"/><circle cx="3546" cy="1211" r="4.5" fill="#000"/>
<path d="M2111 1024 L2151 1024 L2212 1109" fill="none" stroke="#6a6a6a" stroke-width="1.2"/><circle cx="2212" cy="1109" r="4.5" fill="#000"/>
<path d="M2512 1024 L2552 1024 L2613 1109" fill="none" stroke="#6a6a6a" stroke-width="1.2"/><circle cx="2613" cy="1109" r="4.5" fill="#000"/>
<path d="M2913 1024 L2953 1024 L3014 1109" fill="none" stroke="#6a6a6a" stroke-width="1.2"/><circle cx="3014" cy="1109" r="4.5" fill="#000"/>
<path d="M3315 1025 L3355 1025 L3415 1109" fill="none" stroke="#6a6a6a" stroke-width="1.2"/><circle cx="3415" cy="1109" r="4.5" fill="#000"/>
<path d="M2210 1000 L2250 1000 L2285 1074" fill="none" stroke="#6a6a6a" stroke-width="1.2"/><circle cx="2285" cy="1074" r="4.5" fill="#000"/>
<path d="M2614 994 L2653 994 L2688 1069" fill="none" stroke="#6a6a6a" stroke-width="1.2"/><circle cx="2688" cy="1069" r="4.5" fill="#000"/>
<path d="M3019 996 L3058 996 L3094 1070" fill="none" stroke="#6a6a6a" stroke-width="1.2"/><circle cx="3094" cy="1070" r="4.5" fill="#000"/>
<path d="M3408 987 L3448 987 L3483 1061" fill="none" stroke="#6a6a6a" stroke-width="1.2"/><circle cx="3483" cy="1061" r="4.5" fill="#000"/>
<circle cx="1602" cy="761" r="27.5" fill="#fff" stroke="#000" stroke-width="1.4"/><path d="M1574.5 761 H1629.5" stroke="#000" stroke-width="1.5"/><text x="1602" y="755" font-family="Liberation Serif" font-size="16.5" text-anchor="middle" fill="#000">CHL</text><text x="1602" y="780" font-family="Liberation Serif" font-size="16.5" text-anchor="middle" fill="#000">02</text>
<circle cx="1739" cy="887" r="27.5" fill="#fff" stroke="#000" stroke-width="1.4"/><path d="M1711.5 887 H1766.5" stroke="#000" stroke-width="1.5"/><text x="1739" y="881" font-family="Liberation Serif" font-size="16.5" text-anchor="middle" fill="#000">5</text><text x="1739" y="906" font-family="Liberation Serif" font-size="16.5" text-anchor="middle" fill="#000">02</text>
<circle cx="1577" cy="1057" r="27.5" fill="#fff" stroke="#000" stroke-width="1.4"/><path d="M1549.5 1057 H1604.5" stroke="#000" stroke-width="1.5"/><text x="1577" y="1051" font-family="Liberation Serif" font-size="16.5" text-anchor="middle" fill="#000">1</text><text x="1577" y="1076" font-family="Liberation Serif" font-size="16.5" text-anchor="middle" fill="#000">02</text>
<circle cx="1614" cy="1136" r="27.5" fill="#fff" stroke="#000" stroke-width="1.4"/><path d="M1586.5 1136 H1641.5" stroke="#000" stroke-width="1.5"/><text x="1614" y="1130" font-family="Liberation Serif" font-size="16.5" text-anchor="middle" fill="#000">13</text><text x="1614" y="1155" font-family="Liberation Serif" font-size="16.5" text-anchor="middle" fill="#000">03</text>
<circle cx="1644" cy="1274" r="27.5" fill="#fff" stroke="#000" stroke-width="1.4"/><path d="M1616.5 1274 H1671.5" stroke="#000" stroke-width="1.5"/><text x="1644" y="1268" font-family="Liberation Serif" font-size="16.5" text-anchor="middle" fill="#000">3</text><text x="1644" y="1293" font-family="Liberation Serif" font-size="16.5" text-anchor="middle" fill="#000">02</text>
<circle cx="1804" cy="1275" r="27.5" fill="#fff" stroke="#000" stroke-width="1.4"/><path d="M1776.5 1275 H1831.5" stroke="#000" stroke-width="1.5"/><text x="1804" y="1269" font-family="Liberation Serif" font-size="16.5" text-anchor="middle" fill="#000">2</text><text x="1804" y="1294" font-family="Liberation Serif" font-size="16.5" text-anchor="middle" fill="#000">02</text>
<circle cx="1971" cy="1274" r="27.5" fill="#fff" stroke="#000" stroke-width="1.4"/><path d="M1943.5 1274 H1998.5" stroke="#000" stroke-width="1.5"/><text x="1971" y="1268" font-family="Liberation Serif" font-size="16.5" text-anchor="middle" fill="#000">4</text><text x="1971" y="1293" font-family="Liberation Serif" font-size="16.5" text-anchor="middle" fill="#000">02</text>
<circle cx="2208" cy="1275" r="27.5" fill="#fff" stroke="#000" stroke-width="1.4"/><path d="M2180.5 1275 H2235.5" stroke="#000" stroke-width="1.5"/><text x="2208" y="1269" font-family="Liberation Serif" font-size="16.5" text-anchor="middle" fill="#000">2</text><text x="2208" y="1294" font-family="Liberation Serif" font-size="16.5" text-anchor="middle" fill="#000">02</text>
<circle cx="2420" cy="1274" r="27.5" fill="#fff" stroke="#000" stroke-width="1.4"/><path d="M2392.5 1274 H2447.5" stroke="#000" stroke-width="1.5"/><text x="2420" y="1268" font-family="Liberation Serif" font-size="16.5" text-anchor="middle" fill="#000">4</text><text x="2420" y="1293" font-family="Liberation Serif" font-size="16.5" text-anchor="middle" fill="#000">02</text>
<circle cx="2613" cy="1251" r="27.5" fill="#fff" stroke="#000" stroke-width="1.4"/><path d="M2585.5 1251 H2640.5" stroke="#000" stroke-width="1.5"/><text x="2613" y="1245" font-family="Liberation Serif" font-size="16.5" text-anchor="middle" fill="#000">2</text><text x="2613" y="1270" font-family="Liberation Serif" font-size="16.5" text-anchor="middle" fill="#000">02</text>
<circle cx="2793" cy="1252" r="27.5" fill="#fff" stroke="#000" stroke-width="1.4"/><path d="M2765.5 1252 H2820.5" stroke="#000" stroke-width="1.5"/><text x="2793" y="1246" font-family="Liberation Serif" font-size="16.5" text-anchor="middle" fill="#000">4</text><text x="2793" y="1271" font-family="Liberation Serif" font-size="16.5" text-anchor="middle" fill="#000">02</text>
<circle cx="3014" cy="1251" r="27.5" fill="#fff" stroke="#000" stroke-width="1.4"/><path d="M2986.5 1251 H3041.5" stroke="#000" stroke-width="1.5"/><text x="3014" y="1245" font-family="Liberation Serif" font-size="16.5" text-anchor="middle" fill="#000">2</text><text x="3014" y="1270" font-family="Liberation Serif" font-size="16.5" text-anchor="middle" fill="#000">02</text>
<circle cx="3189" cy="1274" r="27.5" fill="#fff" stroke="#000" stroke-width="1.4"/><path d="M3161.5 1274 H3216.5" stroke="#000" stroke-width="1.5"/><text x="3189" y="1268" font-family="Liberation Serif" font-size="16.5" text-anchor="middle" fill="#000">4</text><text x="3189" y="1293" font-family="Liberation Serif" font-size="16.5" text-anchor="middle" fill="#000">02</text>
<circle cx="3417" cy="1251" r="27.5" fill="#fff" stroke="#000" stroke-width="1.4"/><path d="M3389.5 1251 H3444.5" stroke="#000" stroke-width="1.5"/><text x="3417" y="1245" font-family="Liberation Serif" font-size="16.5" text-anchor="middle" fill="#000">2</text><text x="3417" y="1270" font-family="Liberation Serif" font-size="16.5" text-anchor="middle" fill="#000">02</text>
<circle cx="3446" cy="1310" r="27.5" fill="#fff" stroke="#000" stroke-width="1.4"/><path d="M3418.5 1310 H3473.5" stroke="#000" stroke-width="1.5"/><text x="3446" y="1304" font-family="Liberation Serif" font-size="16.5" text-anchor="middle" fill="#000">3</text><text x="3446" y="1329" font-family="Liberation Serif" font-size="16.5" text-anchor="middle" fill="#000">02</text>
<circle cx="3564" cy="887" r="27.5" fill="#fff" stroke="#000" stroke-width="1.4"/><path d="M3536.5 887 H3591.5" stroke="#000" stroke-width="1.5"/><text x="3564" y="881" font-family="Liberation Serif" font-size="16.5" text-anchor="middle" fill="#000">5</text><text x="3564" y="906" font-family="Liberation Serif" font-size="16.5" text-anchor="middle" fill="#000">02</text>
<circle cx="2084" cy="1024" r="27.5" fill="#fff" stroke="#000" stroke-width="1.4"/><path d="M2056.5 1024 H2111.5" stroke="#000" stroke-width="1.5"/><text x="2084" y="1018" font-family="Liberation Serif" font-size="16.5" text-anchor="middle" fill="#000">6</text><text x="2084" y="1043" font-family="Liberation Serif" font-size="16.5" text-anchor="middle" fill="#000">02</text>
<circle cx="2485" cy="1024" r="27.5" fill="#fff" stroke="#000" stroke-width="1.4"/><path d="M2457.5 1024 H2512.5" stroke="#000" stroke-width="1.5"/><text x="2485" y="1018" font-family="Liberation Serif" font-size="16.5" text-anchor="middle" fill="#000">6</text><text x="2485" y="1043" font-family="Liberation Serif" font-size="16.5" text-anchor="middle" fill="#000">02</text>
<circle cx="2886" cy="1024" r="27.5" fill="#fff" stroke="#000" stroke-width="1.4"/><path d="M2858.5 1024 H2913.5" stroke="#000" stroke-width="1.5"/><text x="2886" y="1018" font-family="Liberation Serif" font-size="16.5" text-anchor="middle" fill="#000">6</text><text x="2886" y="1043" font-family="Liberation Serif" font-size="16.5" text-anchor="middle" fill="#000">02</text>
<circle cx="3288" cy="1025" r="27.5" fill="#fff" stroke="#000" stroke-width="1.4"/><path d="M3260.5 1025 H3315.5" stroke="#000" stroke-width="1.5"/><text x="3288" y="1019" font-family="Liberation Serif" font-size="16.5" text-anchor="middle" fill="#000">6</text><text x="3288" y="1044" font-family="Liberation Serif" font-size="16.5" text-anchor="middle" fill="#000">02</text>
<circle cx="2183" cy="1000" r="27.5" fill="#fff" stroke="#000" stroke-width="1.4"/><path d="M2155.5 1000 H2210.5" stroke="#000" stroke-width="1.5"/><text x="2183" y="994" font-family="Liberation Serif" font-size="16.5" text-anchor="middle" fill="#000">14</text><text x="2183" y="1019" font-family="Liberation Serif" font-size="16.5" text-anchor="middle" fill="#000">03</text>
<circle cx="2587" cy="994" r="27.5" fill="#fff" stroke="#000" stroke-width="1.4"/><path d="M2559.5 994 H2614.5" stroke="#000" stroke-width="1.5"/><text x="2587" y="988" font-family="Liberation Serif" font-size="16.5" text-anchor="middle" fill="#000">14</text><text x="2587" y="1013" font-family="Liberation Serif" font-size="16.5" text-anchor="middle" fill="#000">03</text>
<circle cx="2992" cy="996" r="27.5" fill="#fff" stroke="#000" stroke-width="1.4"/><path d="M2964.5 996 H3019.5" stroke="#000" stroke-width="1.5"/><text x="2992" y="990" font-family="Liberation Serif" font-size="16.5" text-anchor="middle" fill="#000">14</text><text x="2992" y="1015" font-family="Liberation Serif" font-size="16.5" text-anchor="middle" fill="#000">03</text>
<circle cx="3381" cy="987" r="27.5" fill="#fff" stroke="#000" stroke-width="1.4"/><path d="M3353.5 987 H3408.5" stroke="#000" stroke-width="1.5"/><text x="3381" y="981" font-family="Liberation Serif" font-size="16.5" text-anchor="middle" fill="#000">14</text><text x="3381" y="1006" font-family="Liberation Serif" font-size="16.5" text-anchor="middle" fill="#000">03</text>
<text x="1980" y="1037" font-size="16" text-anchor="start" fill="#000">SEAM</text><path d="M1972 1031 L1931 1031 L1909 977" fill="none" stroke="#6a6a6a" stroke-width="1.2"/><path d="M1909 977 L1911.0 997.8 L1922.1 993.3Z" fill="#000"/>
<text x="2385" y="1023" font-size="16" text-anchor="start" fill="#000">SEAM</text><path d="M2376 1017 L2336 1017 L2310.5 977" fill="none" stroke="#6a6a6a" stroke-width="1.2"/><path d="M2310.5 977 L2316.2 997.1 L2326.3 990.6Z" fill="#000"/>
<text x="2786" y="1023" font-size="16" text-anchor="start" fill="#000">SEAM</text><path d="M2777 1017 L2737 1017 L2711.5 977" fill="none" stroke="#6a6a6a" stroke-width="1.2"/><path d="M2711.5 977 L2717.2 997.1 L2727.3 990.6Z" fill="#000"/>
<text x="3187" y="1023" font-size="16" text-anchor="start" fill="#000">SEAM</text><path d="M3178 1017 L3138 1017 L3112.5 977" fill="none" stroke="#6a6a6a" stroke-width="1.2"/><path d="M3112.5 977 L3118.2 997.1 L3128.3 990.6Z" fill="#000"/>
<text x="3362" y="941" font-size="16" text-anchor="start" fill="#000">SEAM</text><path d="M3415 934 L3455 934 L3513 977" fill="none" stroke="#6a6a6a" stroke-width="1.2"/><path d="M3513 977 L3500.5 960.3 L3493.4 969.9Z" fill="#000"/>
<text transform="translate(2106.5,1798) rotate(90)" font-size="16" text-anchor="middle" fill="#000">Ø6'-1½"</text>
<path d="M2106.5 1833 L2107.5 1853 M2100.5 1847 L2112.5 1860" stroke="#555" stroke-width="1"/>
<text transform="translate(2507.5,1798) rotate(90)" font-size="16" text-anchor="middle" fill="#000">Ø6'-1½"</text>
<path d="M2507.5 1833 L2508.5 1853 M2501.5 1847 L2513.5 1860" stroke="#555" stroke-width="1"/>
<text transform="translate(2908.5,1798) rotate(90)" font-size="16" text-anchor="middle" fill="#000">Ø6'-1½"</text>
<path d="M2908.5 1833 L2909.5 1853 M2902.5 1847 L2914.5 1860" stroke="#555" stroke-width="1"/>
<text transform="translate(3309.5,1798) rotate(90)" font-size="16" text-anchor="middle" fill="#000">Ø6'-1½"</text>
<path d="M3309.5 1833 L3310.5 1853 M3303.5 1847 L3315.5 1860" stroke="#555" stroke-width="1"/>
<path d="M2270.0 1666 H2359.0" stroke="#000" stroke-width="1.5"/><path d="M2282.0 1654 V1678 M2274.0 1674 L2290.0 1658" stroke="#000" stroke-width="1.3"/><path d="M2314.5 1654 V1678 M2306.5 1674 L2322.5 1658" stroke="#000" stroke-width="1.3"/><path d="M2347.0 1654 V1678 M2339.0 1674 L2355.0 1658" stroke="#000" stroke-width="1.3"/><text x="2240.5" y="1672" font-size="16" text-anchor="start" fill="#000">EQ</text><text x="2367.5" y="1672" font-size="16" text-anchor="start" fill="#000">EQ</text>
<path d="M2671.0 1666 H2760.0" stroke="#000" stroke-width="1.5"/><path d="M2683.0 1654 V1678 M2675.0 1674 L2691.0 1658" stroke="#000" stroke-width="1.3"/><path d="M2715.5 1654 V1678 M2707.5 1674 L2723.5 1658" stroke="#000" stroke-width="1.3"/><path d="M2748.0 1654 V1678 M2740.0 1674 L2756.0 1658" stroke="#000" stroke-width="1.3"/><text x="2641.5" y="1672" font-size="16" text-anchor="start" fill="#000">EQ</text><text x="2768.5" y="1672" font-size="16" text-anchor="start" fill="#000">EQ</text>
<path d="M3072.0 1666 H3161.0" stroke="#000" stroke-width="1.5"/><path d="M3084.0 1654 V1678 M3076.0 1674 L3092.0 1658" stroke="#000" stroke-width="1.3"/><path d="M3116.5 1654 V1678 M3108.5 1674 L3124.5 1658" stroke="#000" stroke-width="1.3"/><path d="M3149.0 1654 V1678 M3141.0 1674 L3157.0 1658" stroke="#000" stroke-width="1.3"/><text x="3042.5" y="1672" font-size="16" text-anchor="start" fill="#000">EQ</text><text x="3169.5" y="1672" font-size="16" text-anchor="start" fill="#000">EQ</text>
<path d="M1810 1632 L1852 1632 L1847 1690" fill="none" stroke="#6a6a6a" stroke-width="1.2"/><circle cx="1847" cy="1690" r="4.5" fill="#000"/>
<path d="M1667 1767 L1692 1767 L1799 1839" fill="none" stroke="#6a6a6a" stroke-width="1.2"/><circle cx="1799" cy="1839" r="4.5" fill="#000"/>
<path d="M1674 1988 L1714 1988 L1742 1917" fill="none" stroke="#6a6a6a" stroke-width="1.2"/><circle cx="1742" cy="1917" r="4.5" fill="#000"/>
<path d="M1807 1992 L1847 1992 L1880 1930" fill="none" stroke="#6a6a6a" stroke-width="1.2"/><circle cx="1880" cy="1930" r="4.5" fill="#000"/>
<path d="M1905 2012 L1945 2012 L1913 1905" fill="none" stroke="#6a6a6a" stroke-width="1.2"/><circle cx="1913" cy="1905" r="4.5" fill="#000"/>
<path d="M2075 1991 L2115 1991 L2149 1929" fill="none" stroke="#6a6a6a" stroke-width="1.2"/><circle cx="2149" cy="1929" r="4.5" fill="#000"/>
<path d="M2258 1976 L2298 1976 L2315 1905" fill="none" stroke="#6a6a6a" stroke-width="1.2"/><circle cx="2315" cy="1905" r="4.5" fill="#000"/>
<path d="M2402 1991 L2442 1991 L2476 1929" fill="none" stroke="#6a6a6a" stroke-width="1.2"/><circle cx="2476" cy="1929" r="4.5" fill="#000"/>
<path d="M2659 1976 L2699 1976 L2716 1905" fill="none" stroke="#6a6a6a" stroke-width="1.2"/><circle cx="2716" cy="1905" r="4.5" fill="#000"/>
<path d="M2835 1974 L2875 1974 L2909 1929" fill="none" stroke="#6a6a6a" stroke-width="1.2"/><circle cx="2909" cy="1929" r="4.5" fill="#000"/>
<path d="M3062 1976 L3102 1976 L3117 1905" fill="none" stroke="#6a6a6a" stroke-width="1.2"/><circle cx="3117" cy="1905" r="4.5" fill="#000"/>
<path d="M3237 1974 L3277 1974 L3311 1929" fill="none" stroke="#6a6a6a" stroke-width="1.2"/><circle cx="3311" cy="1929" r="4.5" fill="#000"/>
<path d="M3462 1976 L3502 1976 L3518 1905" fill="none" stroke="#6a6a6a" stroke-width="1.2"/><circle cx="3518" cy="1905" r="4.5" fill="#000"/>
<path d="M1995 1721 L1975 1721 L1956 1808" fill="none" stroke="#6a6a6a" stroke-width="1.2"/><circle cx="1956" cy="1808" r="4.5" fill="#000"/>
<path d="M2114 1743 L2154 1743 L2216 1827" fill="none" stroke="#6a6a6a" stroke-width="1.2"/><circle cx="2216" cy="1827" r="4.5" fill="#000"/>
<path d="M2423 1743 L2393 1743 L2383 1832" fill="none" stroke="#6a6a6a" stroke-width="1.2"/><circle cx="2383" cy="1832" r="4.5" fill="#000"/>
<path d="M2547 1740 L2587 1740 L2617 1827" fill="none" stroke="#6a6a6a" stroke-width="1.2"/><circle cx="2617" cy="1827" r="4.5" fill="#000"/>
<path d="M2813 1747 L2794 1747 L2784 1833" fill="none" stroke="#6a6a6a" stroke-width="1.2"/><circle cx="2784" cy="1833" r="4.5" fill="#000"/>
<path d="M2941 1742 L2981 1742 L3018 1827" fill="none" stroke="#6a6a6a" stroke-width="1.2"/><circle cx="3018" cy="1827" r="4.5" fill="#000"/>
<path d="M3206 1743 L3186 1743 L3186 1832" fill="none" stroke="#6a6a6a" stroke-width="1.2"/><circle cx="3186" cy="1832" r="4.5" fill="#000"/>
<path d="M3337 1743 L3377 1743 L3418 1827" fill="none" stroke="#6a6a6a" stroke-width="1.2"/><circle cx="3418" cy="1827" r="4.5" fill="#000"/>
<circle cx="1783" cy="1632" r="27.5" fill="#fff" stroke="#000" stroke-width="1.4"/><path d="M1755.5 1632 H1810.5" stroke="#000" stroke-width="1.5"/><text x="1783" y="1626" font-family="Liberation Serif" font-size="16.5" text-anchor="middle" fill="#000">5</text><text x="1783" y="1651" font-family="Liberation Serif" font-size="16.5" text-anchor="middle" fill="#000">02</text>
<circle cx="1640" cy="1767" r="27.5" fill="#fff" stroke="#000" stroke-width="1.4"/><path d="M1612.5 1767 H1667.5" stroke="#000" stroke-width="1.5"/><text x="1640" y="1761" font-family="Liberation Serif" font-size="16.5" text-anchor="middle" fill="#000">13</text><text x="1640" y="1786" font-family="Liberation Serif" font-size="16.5" text-anchor="middle" fill="#000">03</text>
<circle cx="1647" cy="1988" r="27.5" fill="#fff" stroke="#000" stroke-width="1.4"/><path d="M1619.5 1988 H1674.5" stroke="#000" stroke-width="1.5"/><text x="1647" y="1982" font-family="Liberation Serif" font-size="16.5" text-anchor="middle" fill="#000">1</text><text x="1647" y="2007" font-family="Liberation Serif" font-size="16.5" text-anchor="middle" fill="#000">02</text>
<circle cx="1780" cy="1992" r="27.5" fill="#fff" stroke="#000" stroke-width="1.4"/><path d="M1752.5 1992 H1807.5" stroke="#000" stroke-width="1.5"/><text x="1780" y="1986" font-family="Liberation Serif" font-size="16.5" text-anchor="middle" fill="#000">3</text><text x="1780" y="2011" font-family="Liberation Serif" font-size="16.5" text-anchor="middle" fill="#000">02</text>
<circle cx="1878" cy="2012" r="27.5" fill="#fff" stroke="#000" stroke-width="1.4"/><path d="M1850.5 2012 H1905.5" stroke="#000" stroke-width="1.5"/><text x="1878" y="2006" font-family="Liberation Serif" font-size="16.5" text-anchor="middle" fill="#000">2</text><text x="1878" y="2031" font-family="Liberation Serif" font-size="16.5" text-anchor="middle" fill="#000">02</text>
<circle cx="2048" cy="1991" r="27.5" fill="#fff" stroke="#000" stroke-width="1.4"/><path d="M2020.5 1991 H2075.5" stroke="#000" stroke-width="1.5"/><text x="2048" y="1985" font-family="Liberation Serif" font-size="16.5" text-anchor="middle" fill="#000">4</text><text x="2048" y="2010" font-family="Liberation Serif" font-size="16.5" text-anchor="middle" fill="#000">02</text>
<circle cx="2231" cy="1976" r="27.5" fill="#fff" stroke="#000" stroke-width="1.4"/><path d="M2203.5 1976 H2258.5" stroke="#000" stroke-width="1.5"/><text x="2231" y="1970" font-family="Liberation Serif" font-size="16.5" text-anchor="middle" fill="#000">2</text><text x="2231" y="1995" font-family="Liberation Serif" font-size="16.5" text-anchor="middle" fill="#000">02</text>
<circle cx="2375" cy="1991" r="27.5" fill="#fff" stroke="#000" stroke-width="1.4"/><path d="M2347.5 1991 H2402.5" stroke="#000" stroke-width="1.5"/><text x="2375" y="1985" font-family="Liberation Serif" font-size="16.5" text-anchor="middle" fill="#000">4</text><text x="2375" y="2010" font-family="Liberation Serif" font-size="16.5" text-anchor="middle" fill="#000">02</text>
<circle cx="2632" cy="1976" r="27.5" fill="#fff" stroke="#000" stroke-width="1.4"/><path d="M2604.5 1976 H2659.5" stroke="#000" stroke-width="1.5"/><text x="2632" y="1970" font-family="Liberation Serif" font-size="16.5" text-anchor="middle" fill="#000">2</text><text x="2632" y="1995" font-family="Liberation Serif" font-size="16.5" text-anchor="middle" fill="#000">02</text>
<circle cx="2808" cy="1974" r="27.5" fill="#fff" stroke="#000" stroke-width="1.4"/><path d="M2780.5 1974 H2835.5" stroke="#000" stroke-width="1.5"/><text x="2808" y="1968" font-family="Liberation Serif" font-size="16.5" text-anchor="middle" fill="#000">4</text><text x="2808" y="1993" font-family="Liberation Serif" font-size="16.5" text-anchor="middle" fill="#000">02</text>
<circle cx="3035" cy="1976" r="27.5" fill="#fff" stroke="#000" stroke-width="1.4"/><path d="M3007.5 1976 H3062.5" stroke="#000" stroke-width="1.5"/><text x="3035" y="1970" font-family="Liberation Serif" font-size="16.5" text-anchor="middle" fill="#000">2</text><text x="3035" y="1995" font-family="Liberation Serif" font-size="16.5" text-anchor="middle" fill="#000">02</text>
<circle cx="3210" cy="1974" r="27.5" fill="#fff" stroke="#000" stroke-width="1.4"/><path d="M3182.5 1974 H3237.5" stroke="#000" stroke-width="1.5"/><text x="3210" y="1968" font-family="Liberation Serif" font-size="16.5" text-anchor="middle" fill="#000">4</text><text x="3210" y="1993" font-family="Liberation Serif" font-size="16.5" text-anchor="middle" fill="#000">02</text>
<circle cx="3435" cy="1976" r="27.5" fill="#fff" stroke="#000" stroke-width="1.4"/><path d="M3407.5 1976 H3462.5" stroke="#000" stroke-width="1.5"/><text x="3435" y="1970" font-family="Liberation Serif" font-size="16.5" text-anchor="middle" fill="#000">2</text><text x="3435" y="1995" font-family="Liberation Serif" font-size="16.5" text-anchor="middle" fill="#000">02</text>
<circle cx="2022" cy="1721" r="27.5" fill="#fff" stroke="#000" stroke-width="1.4"/><path d="M1994.5 1721 H2049.5" stroke="#000" stroke-width="1.5"/><text x="2022" y="1715" font-family="Liberation Serif" font-size="16.5" text-anchor="middle" fill="#000">14</text><text x="2022" y="1740" font-family="Liberation Serif" font-size="16.5" text-anchor="middle" fill="#000">03</text>
<circle cx="2087" cy="1743" r="27.5" fill="#fff" stroke="#000" stroke-width="1.4"/><path d="M2059.5 1743 H2114.5" stroke="#000" stroke-width="1.5"/><text x="2087" y="1737" font-family="Liberation Serif" font-size="16.5" text-anchor="middle" fill="#000">6</text><text x="2087" y="1762" font-family="Liberation Serif" font-size="16.5" text-anchor="middle" fill="#000">02</text>
<circle cx="2450" cy="1743" r="27.5" fill="#fff" stroke="#000" stroke-width="1.4"/><path d="M2422.5 1743 H2477.5" stroke="#000" stroke-width="1.5"/><text x="2450" y="1737" font-family="Liberation Serif" font-size="16.5" text-anchor="middle" fill="#000">14</text><text x="2450" y="1762" font-family="Liberation Serif" font-size="16.5" text-anchor="middle" fill="#000">03</text>
<circle cx="2520" cy="1740" r="27.5" fill="#fff" stroke="#000" stroke-width="1.4"/><path d="M2492.5 1740 H2547.5" stroke="#000" stroke-width="1.5"/><text x="2520" y="1734" font-family="Liberation Serif" font-size="16.5" text-anchor="middle" fill="#000">6</text><text x="2520" y="1759" font-family="Liberation Serif" font-size="16.5" text-anchor="middle" fill="#000">02</text>
<circle cx="2841" cy="1747" r="27.5" fill="#fff" stroke="#000" stroke-width="1.4"/><path d="M2813.5 1747 H2868.5" stroke="#000" stroke-width="1.5"/><text x="2841" y="1741" font-family="Liberation Serif" font-size="16.5" text-anchor="middle" fill="#000">14</text><text x="2841" y="1766" font-family="Liberation Serif" font-size="16.5" text-anchor="middle" fill="#000">03</text>
<circle cx="2914" cy="1742" r="27.5" fill="#fff" stroke="#000" stroke-width="1.4"/><path d="M2886.5 1742 H2941.5" stroke="#000" stroke-width="1.5"/><text x="2914" y="1736" font-family="Liberation Serif" font-size="16.5" text-anchor="middle" fill="#000">6</text><text x="2914" y="1761" font-family="Liberation Serif" font-size="16.5" text-anchor="middle" fill="#000">02</text>
<circle cx="3233" cy="1743" r="27.5" fill="#fff" stroke="#000" stroke-width="1.4"/><path d="M3205.5 1743 H3260.5" stroke="#000" stroke-width="1.5"/><text x="3233" y="1737" font-family="Liberation Serif" font-size="16.5" text-anchor="middle" fill="#000">14</text><text x="3233" y="1762" font-family="Liberation Serif" font-size="16.5" text-anchor="middle" fill="#000">03</text>
<circle cx="3310" cy="1743" r="27.5" fill="#fff" stroke="#000" stroke-width="1.4"/><path d="M3282.5 1743 H3337.5" stroke="#000" stroke-width="1.5"/><text x="3310" y="1737" font-family="Liberation Serif" font-size="16.5" text-anchor="middle" fill="#000">6</text><text x="3310" y="1762" font-family="Liberation Serif" font-size="16.5" text-anchor="middle" fill="#000">02</text>
<circle cx="3584" cy="1632" r="27.5" fill="#fff" stroke="#000" stroke-width="1.4"/><path d="M3556.5 1632 H3611.5" stroke="#000" stroke-width="1.5"/><text x="3584" y="1626" font-family="Liberation Serif" font-size="16.5" text-anchor="middle" fill="#000"></text><text x="3584" y="1651" font-family="Liberation Serif" font-size="16.5" text-anchor="middle" fill="#000"></text>
<circle cx="3584" cy="1988" r="27.5" fill="#fff" stroke="#000" stroke-width="1.4"/><path d="M3556.5 1988 H3611.5" stroke="#000" stroke-width="1.5"/><text x="3584" y="1982" font-family="Liberation Serif" font-size="16.5" text-anchor="middle" fill="#000"></text><text x="3584" y="2007" font-family="Liberation Serif" font-size="16.5" text-anchor="middle" fill="#000"></text>
<text x="2020" y="1665" font-size="16" text-anchor="start" fill="#000">SEAM</text><path d="M2010 1659 L1962 1659 L1913 1695" fill="none" stroke="#6a6a6a" stroke-width="1.2"/><path d="M1913 1695 L1932.7 1688.0 L1925.6 1678.3Z" fill="#000"/>
<text x="2199" y="1741" font-size="16" text-anchor="start" fill="#000">SEAM</text><path d="M2264 1735 L2291 1735 L2314.5 1695" fill="none" stroke="#6a6a6a" stroke-width="1.2"/><path d="M2314.5 1695 L2299.2 1709.2 L2309.5 1715.3Z" fill="#000"/>
<text x="2599" y="1741" font-size="16" text-anchor="start" fill="#000">SEAM</text><path d="M2664 1735 L2691 1735 L2715.5 1695" fill="none" stroke="#6a6a6a" stroke-width="1.2"/><path d="M2715.5 1695 L2699.9 1708.9 L2710.2 1715.2Z" fill="#000"/>
<text x="3000" y="1741" font-size="16" text-anchor="start" fill="#000">SEAM</text><path d="M3065 1735 L3092 1735 L3116.5 1695" fill="none" stroke="#6a6a6a" stroke-width="1.2"/><path d="M3116.5 1695 L3100.9 1708.9 L3111.2 1715.2Z" fill="#000"/>
<text x="3406" y="1755" font-size="16" text-anchor="start" fill="#000">SEAM</text><path d="M3470 1749 L3494 1749 L3517 1695" fill="none" stroke="#6a6a6a" stroke-width="1.2"/><path d="M3517 1695 L3503.6 1711.0 L3514.7 1715.8Z" fill="#000"/>
<path d="M2503 554 H3000" stroke="#000" stroke-width="3"/><circle cx="2546" cy="554" r="26" fill="#fff" stroke="#000" stroke-width="2.6"/><path d="M2520 554 H2572" stroke="#000" stroke-width="2.6"/><text x="2546" y="550" font-size="16" text-anchor="middle" fill="#000">CH</text><text x="2546" y="571" font-size="16" text-anchor="middle" fill="#000">01</text><text x="2586" y="549" font-size="21" textLength="387" lengthAdjust="spacing" fill="#2a2a2a">ICE CREAM HALLWAY PLAN VIEW</text><text x="2822" y="567" font-size="12.5" fill="#000" textLength="126" lengthAdjust="spacing">SCALE=&#160;&#160; 1/2"=1'-0"</text>
<path d="M2504 1321 H2999" stroke="#000" stroke-width="3"/><circle cx="2546" cy="1321" r="26" fill="#fff" stroke="#000" stroke-width="2.6"/><path d="M2520 1321 H2572" stroke="#000" stroke-width="2.6"/><text x="2546" y="1317" font-size="16" text-anchor="middle" fill="#000">AA</text><text x="2546" y="1338" font-size="16" text-anchor="middle" fill="#000">01</text><text x="2586" y="1316" font-size="21" textLength="300" lengthAdjust="spacing" fill="#2a2a2a">SECTION AA (LEFT WALL)</text><text x="2822" y="1334" font-size="12.5" fill="#000" textLength="126" lengthAdjust="spacing">SCALE=&#160;&#160; 1/2"=1'-0"</text>
<path d="M2516 2022 A30 30 0 0 1 2576 2022" fill="none" stroke="#000" stroke-width="2.5"/><path d="M2745 2022 L2752 2014 M2930 2014 L2938 2022" stroke="#000" stroke-width="1.5"/>
<path d="M1783 484 V540" stroke="#000" stroke-width="1.3"/><path d="M1698.5 484 V522" stroke="#777" stroke-width="1" stroke-dasharray="10 4"/>
<path d="M1752.5 501 H1773.6 V530 M1812 501 H1791 V530" stroke="#777" stroke-width="1"/>
<path d="M1746 541 H1818 M1769 530 V550 M1772 530 V550 M1775 530 V550 M1790 530 V550 M1794 530 V550 M1796 530 V550 M1764 547 L1780 531 M1784 547 L1800 531" stroke="#000" stroke-width="1"/>
<text x="1674" y="507" font-size="15" fill="#000"><tspan font-size="9" dy="-4">1</tspan><tspan font-size="9" dx="-5" dy="9">4</tspan><tspan dy="-5">" SINTRA</tspan></text>
<text x="1822" y="507" font-size="15" fill="#000"><tspan font-size="9" dy="-4">1</tspan><tspan font-size="9" dx="-5" dy="9">4</tspan><tspan dy="-5">" SINTRA</tspan></text>
<text x="1666" y="547" font-size="15" fill="#000"><tspan font-size="9" dy="-4">1</tspan><tspan font-size="9" dx="-5" dy="9">8</tspan><tspan dy="-5">" DIBOND</tspan></text>
<text x="1828" y="547" font-size="15" fill="#000"><tspan font-size="9" dy="-4">1</tspan><tspan font-size="9" dx="-5" dy="9">8</tspan><tspan dy="-5">" DIBOND</tspan></text>
<rect x="1730" y="532" width="102" height="118" rx="22" fill="none" stroke="#f020f0" stroke-width="1.3" stroke-dasharray="16 5"/>
<rect x="1768.5" y="560" width="27" height="90" fill="#fff" stroke="#555" stroke-width="1"/><path d="M1771 560 V650 M1793 560 V650" stroke="#555" stroke-width="1"/>
<rect x="1771" y="560" width="22" height="36" fill="#fff" stroke="#2030e0" stroke-width="1.2"/><path d="M1775 596 V650 M1790 596 V650" stroke="#2030e0" stroke-width="1.3"/><path d="M1777 589 V650 M1787 589 V650 M1777 589 H1787" stroke="#20e0f0" stroke-width="1.2"/>
<path d="M1772 572 L1784 560 M1772 584 L1793 563 M1776 592 L1793 575 M1785 595 L1793 587" stroke="#2030e0" stroke-width="1"/>
<path d="M1897 600 L1857 600 L1780 590" fill="none" stroke="#6a6a6a" stroke-width="1.2"/><path d="M1780 590 L1799.1 598.5 L1800.6 586.6Z" fill="#000"/>
<text x="1907" y="606" font-size="15" text-anchor="start" fill="#000">LEDS IN CHANNEL WITH DIFFUSION</text><text x="1689" y="628" font-size="15" text-anchor="start" fill="#000">NTS</text>
<path d="M1832 622 H1893 Q1900 622 1900 630 V687" fill="none" stroke="#f020f0" stroke-width="1.3" stroke-dasharray="18 4"/><rect x="1895" y="687" width="27" height="30" rx="7" fill="none" stroke="#f020f0" stroke-width="1.3"/>
</g></svg></body></html>
